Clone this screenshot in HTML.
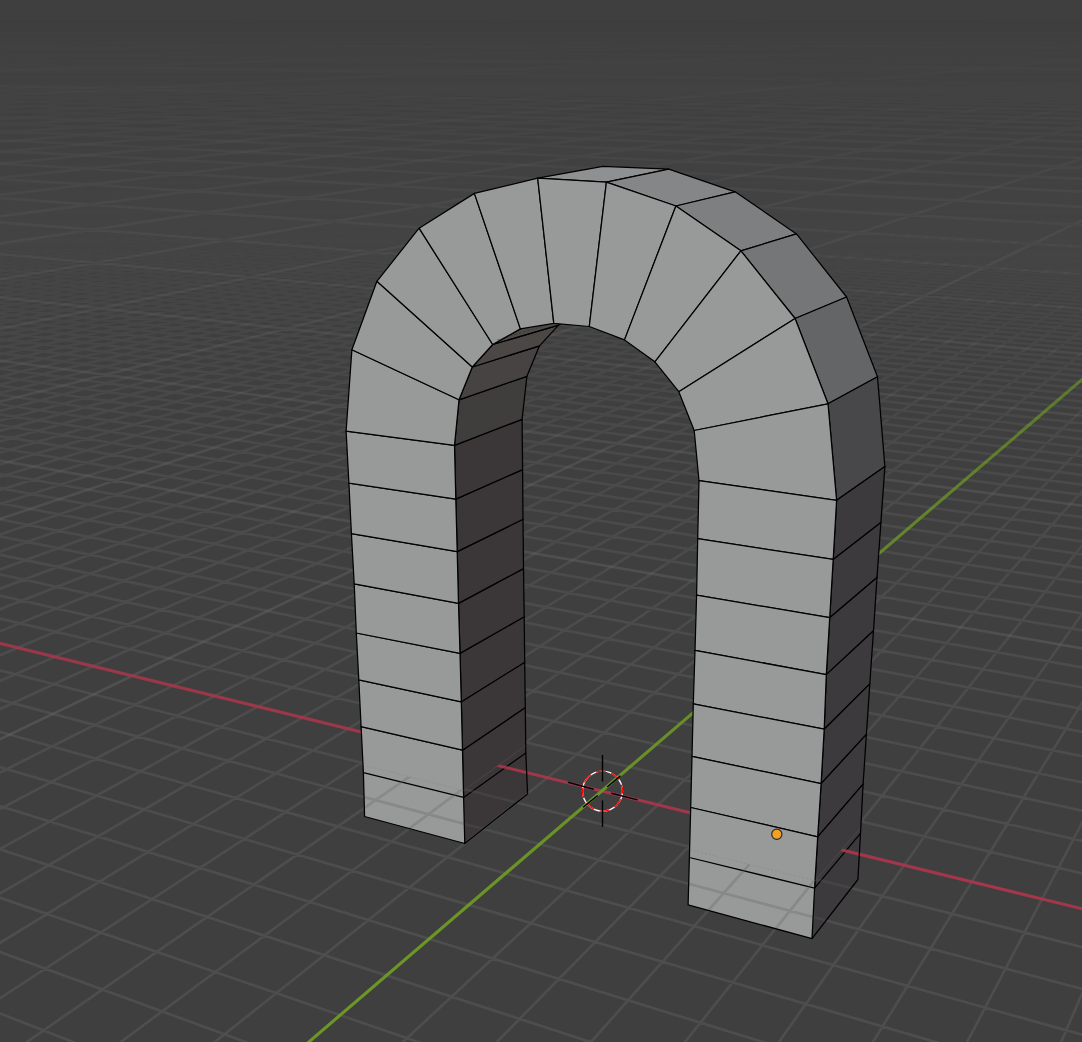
<!DOCTYPE html><html><head><meta charset="utf-8"><title>Blender viewport</title><style>html,body{margin:0;padding:0;background:#3f3f3f;overflow:hidden}svg{display:block}</style></head><body><svg width="1082" height="1042" viewBox="0 0 1082 1042">
<defs>
<linearGradient id="gf" gradientUnits="userSpaceOnUse" x1="0" y1="58" x2="0" y2="1042"><stop offset="0.0000" stop-color="#fff" stop-opacity="0.000"/><stop offset="0.0125" stop-color="#fff" stop-opacity="0.001"/><stop offset="0.0250" stop-color="#fff" stop-opacity="0.009"/><stop offset="0.0375" stop-color="#fff" stop-opacity="0.022"/><stop offset="0.0500" stop-color="#fff" stop-opacity="0.039"/><stop offset="0.0625" stop-color="#fff" stop-opacity="0.059"/><stop offset="0.0750" stop-color="#fff" stop-opacity="0.082"/><stop offset="0.0875" stop-color="#fff" stop-opacity="0.106"/><stop offset="0.1000" stop-color="#fff" stop-opacity="0.131"/><stop offset="0.1125" stop-color="#fff" stop-opacity="0.157"/><stop offset="0.1250" stop-color="#fff" stop-opacity="0.183"/><stop offset="0.1375" stop-color="#fff" stop-opacity="0.210"/><stop offset="0.1500" stop-color="#fff" stop-opacity="0.236"/><stop offset="0.1625" stop-color="#fff" stop-opacity="0.263"/><stop offset="0.1750" stop-color="#fff" stop-opacity="0.289"/><stop offset="0.1875" stop-color="#fff" stop-opacity="0.315"/><stop offset="0.2000" stop-color="#fff" stop-opacity="0.341"/><stop offset="0.2125" stop-color="#fff" stop-opacity="0.367"/><stop offset="0.2250" stop-color="#fff" stop-opacity="0.392"/><stop offset="0.2375" stop-color="#fff" stop-opacity="0.417"/><stop offset="0.2500" stop-color="#fff" stop-opacity="0.442"/><stop offset="0.2625" stop-color="#fff" stop-opacity="0.466"/><stop offset="0.2750" stop-color="#fff" stop-opacity="0.489"/><stop offset="0.2875" stop-color="#fff" stop-opacity="0.513"/><stop offset="0.3000" stop-color="#fff" stop-opacity="0.535"/><stop offset="0.3125" stop-color="#fff" stop-opacity="0.558"/><stop offset="0.3250" stop-color="#fff" stop-opacity="0.579"/><stop offset="0.3375" stop-color="#fff" stop-opacity="0.601"/><stop offset="0.3500" stop-color="#fff" stop-opacity="0.622"/><stop offset="0.3625" stop-color="#fff" stop-opacity="0.642"/><stop offset="0.3750" stop-color="#fff" stop-opacity="0.662"/><stop offset="0.3875" stop-color="#fff" stop-opacity="0.677"/><stop offset="0.4000" stop-color="#fff" stop-opacity="0.690"/><stop offset="0.4125" stop-color="#fff" stop-opacity="0.702"/><stop offset="0.4250" stop-color="#fff" stop-opacity="0.713"/><stop offset="0.4375" stop-color="#fff" stop-opacity="0.725"/><stop offset="0.4500" stop-color="#fff" stop-opacity="0.736"/><stop offset="0.4625" stop-color="#fff" stop-opacity="0.746"/><stop offset="0.4750" stop-color="#fff" stop-opacity="0.757"/><stop offset="0.4875" stop-color="#fff" stop-opacity="0.767"/><stop offset="0.5000" stop-color="#fff" stop-opacity="0.776"/><stop offset="0.5125" stop-color="#fff" stop-opacity="0.785"/><stop offset="0.5250" stop-color="#fff" stop-opacity="0.794"/><stop offset="0.5375" stop-color="#fff" stop-opacity="0.803"/><stop offset="0.5500" stop-color="#fff" stop-opacity="0.812"/><stop offset="0.5625" stop-color="#fff" stop-opacity="0.820"/><stop offset="0.5750" stop-color="#fff" stop-opacity="0.827"/><stop offset="0.5875" stop-color="#fff" stop-opacity="0.835"/><stop offset="0.6000" stop-color="#fff" stop-opacity="0.842"/><stop offset="0.6125" stop-color="#fff" stop-opacity="0.849"/><stop offset="0.6250" stop-color="#fff" stop-opacity="0.856"/><stop offset="0.6375" stop-color="#fff" stop-opacity="0.862"/><stop offset="0.6500" stop-color="#fff" stop-opacity="0.869"/><stop offset="0.6625" stop-color="#fff" stop-opacity="0.875"/><stop offset="0.6750" stop-color="#fff" stop-opacity="0.880"/><stop offset="0.6875" stop-color="#fff" stop-opacity="0.886"/><stop offset="0.7000" stop-color="#fff" stop-opacity="0.891"/><stop offset="0.7125" stop-color="#fff" stop-opacity="0.896"/><stop offset="0.7250" stop-color="#fff" stop-opacity="0.901"/><stop offset="0.7375" stop-color="#fff" stop-opacity="0.906"/><stop offset="0.7500" stop-color="#fff" stop-opacity="0.910"/><stop offset="0.7625" stop-color="#fff" stop-opacity="0.915"/><stop offset="0.7750" stop-color="#fff" stop-opacity="0.919"/><stop offset="0.7875" stop-color="#fff" stop-opacity="0.923"/><stop offset="0.8000" stop-color="#fff" stop-opacity="0.926"/><stop offset="0.8125" stop-color="#fff" stop-opacity="0.930"/><stop offset="0.8250" stop-color="#fff" stop-opacity="0.934"/><stop offset="0.8375" stop-color="#fff" stop-opacity="0.937"/><stop offset="0.8500" stop-color="#fff" stop-opacity="0.940"/><stop offset="0.8625" stop-color="#fff" stop-opacity="0.943"/><stop offset="0.8750" stop-color="#fff" stop-opacity="0.946"/><stop offset="0.8875" stop-color="#fff" stop-opacity="0.949"/><stop offset="0.9000" stop-color="#fff" stop-opacity="0.951"/><stop offset="0.9125" stop-color="#fff" stop-opacity="0.954"/><stop offset="0.9250" stop-color="#fff" stop-opacity="0.956"/><stop offset="0.9375" stop-color="#fff" stop-opacity="0.958"/><stop offset="0.9500" stop-color="#fff" stop-opacity="0.961"/><stop offset="0.9625" stop-color="#fff" stop-opacity="0.963"/><stop offset="0.9750" stop-color="#fff" stop-opacity="0.965"/><stop offset="0.9875" stop-color="#fff" stop-opacity="0.966"/><stop offset="1.0000" stop-color="#fff" stop-opacity="0.968"/></linearGradient>
<linearGradient id="gc" gradientUnits="userSpaceOnUse" x1="0" y1="18" x2="0" y2="1042"><stop offset="0.0000" stop-color="#fff" stop-opacity="0.000"/><stop offset="0.0125" stop-color="#fff" stop-opacity="0.011"/><stop offset="0.0250" stop-color="#fff" stop-opacity="0.044"/><stop offset="0.0375" stop-color="#fff" stop-opacity="0.080"/><stop offset="0.0500" stop-color="#fff" stop-opacity="0.109"/><stop offset="0.0625" stop-color="#fff" stop-opacity="0.135"/><stop offset="0.0750" stop-color="#fff" stop-opacity="0.161"/><stop offset="0.0875" stop-color="#fff" stop-opacity="0.186"/><stop offset="0.1000" stop-color="#fff" stop-opacity="0.211"/><stop offset="0.1125" stop-color="#fff" stop-opacity="0.235"/><stop offset="0.1250" stop-color="#fff" stop-opacity="0.259"/><stop offset="0.1375" stop-color="#fff" stop-opacity="0.283"/><stop offset="0.1500" stop-color="#fff" stop-opacity="0.306"/><stop offset="0.1625" stop-color="#fff" stop-opacity="0.328"/><stop offset="0.1750" stop-color="#fff" stop-opacity="0.350"/><stop offset="0.1875" stop-color="#fff" stop-opacity="0.371"/><stop offset="0.2000" stop-color="#fff" stop-opacity="0.392"/><stop offset="0.2125" stop-color="#fff" stop-opacity="0.413"/><stop offset="0.2250" stop-color="#fff" stop-opacity="0.433"/><stop offset="0.2375" stop-color="#fff" stop-opacity="0.453"/><stop offset="0.2500" stop-color="#fff" stop-opacity="0.472"/><stop offset="0.2625" stop-color="#fff" stop-opacity="0.490"/><stop offset="0.2750" stop-color="#fff" stop-opacity="0.508"/><stop offset="0.2875" stop-color="#fff" stop-opacity="0.526"/><stop offset="0.3000" stop-color="#fff" stop-opacity="0.543"/><stop offset="0.3125" stop-color="#fff" stop-opacity="0.560"/><stop offset="0.3250" stop-color="#fff" stop-opacity="0.576"/><stop offset="0.3375" stop-color="#fff" stop-opacity="0.592"/><stop offset="0.3500" stop-color="#fff" stop-opacity="0.608"/><stop offset="0.3625" stop-color="#fff" stop-opacity="0.623"/><stop offset="0.3750" stop-color="#fff" stop-opacity="0.637"/><stop offset="0.3875" stop-color="#fff" stop-opacity="0.651"/><stop offset="0.4000" stop-color="#fff" stop-opacity="0.665"/><stop offset="0.4125" stop-color="#fff" stop-opacity="0.678"/><stop offset="0.4250" stop-color="#fff" stop-opacity="0.691"/><stop offset="0.4375" stop-color="#fff" stop-opacity="0.704"/><stop offset="0.4500" stop-color="#fff" stop-opacity="0.716"/><stop offset="0.4625" stop-color="#fff" stop-opacity="0.727"/><stop offset="0.4750" stop-color="#fff" stop-opacity="0.739"/><stop offset="0.4875" stop-color="#fff" stop-opacity="0.750"/><stop offset="0.5000" stop-color="#fff" stop-opacity="0.760"/><stop offset="0.5125" stop-color="#fff" stop-opacity="0.771"/><stop offset="0.5250" stop-color="#fff" stop-opacity="0.780"/><stop offset="0.5375" stop-color="#fff" stop-opacity="0.790"/><stop offset="0.5500" stop-color="#fff" stop-opacity="0.799"/><stop offset="0.5625" stop-color="#fff" stop-opacity="0.808"/><stop offset="0.5750" stop-color="#fff" stop-opacity="0.817"/><stop offset="0.5875" stop-color="#fff" stop-opacity="0.825"/><stop offset="0.6000" stop-color="#fff" stop-opacity="0.833"/><stop offset="0.6125" stop-color="#fff" stop-opacity="0.840"/><stop offset="0.6250" stop-color="#fff" stop-opacity="0.848"/><stop offset="0.6375" stop-color="#fff" stop-opacity="0.855"/><stop offset="0.6500" stop-color="#fff" stop-opacity="0.861"/><stop offset="0.6625" stop-color="#fff" stop-opacity="0.868"/><stop offset="0.6750" stop-color="#fff" stop-opacity="0.874"/><stop offset="0.6875" stop-color="#fff" stop-opacity="0.880"/><stop offset="0.7000" stop-color="#fff" stop-opacity="0.886"/><stop offset="0.7125" stop-color="#fff" stop-opacity="0.891"/><stop offset="0.7250" stop-color="#fff" stop-opacity="0.897"/><stop offset="0.7375" stop-color="#fff" stop-opacity="0.902"/><stop offset="0.7500" stop-color="#fff" stop-opacity="0.907"/><stop offset="0.7625" stop-color="#fff" stop-opacity="0.911"/><stop offset="0.7750" stop-color="#fff" stop-opacity="0.916"/><stop offset="0.7875" stop-color="#fff" stop-opacity="0.920"/><stop offset="0.8000" stop-color="#fff" stop-opacity="0.924"/><stop offset="0.8125" stop-color="#fff" stop-opacity="0.928"/><stop offset="0.8250" stop-color="#fff" stop-opacity="0.932"/><stop offset="0.8375" stop-color="#fff" stop-opacity="0.935"/><stop offset="0.8500" stop-color="#fff" stop-opacity="0.938"/><stop offset="0.8625" stop-color="#fff" stop-opacity="0.942"/><stop offset="0.8750" stop-color="#fff" stop-opacity="0.945"/><stop offset="0.8875" stop-color="#fff" stop-opacity="0.948"/><stop offset="0.9000" stop-color="#fff" stop-opacity="0.950"/><stop offset="0.9125" stop-color="#fff" stop-opacity="0.953"/><stop offset="0.9250" stop-color="#fff" stop-opacity="0.956"/><stop offset="0.9375" stop-color="#fff" stop-opacity="0.958"/><stop offset="0.9500" stop-color="#fff" stop-opacity="0.960"/><stop offset="0.9625" stop-color="#fff" stop-opacity="0.962"/><stop offset="0.9750" stop-color="#fff" stop-opacity="0.964"/><stop offset="0.9875" stop-color="#fff" stop-opacity="0.966"/><stop offset="1.0000" stop-color="#fff" stop-opacity="0.968"/></linearGradient>
<linearGradient id="gh" gradientUnits="userSpaceOnUse" x1="0" y1="18" x2="0" y2="1042"><stop offset="0.0000" stop-color="#fff" stop-opacity="0.000"/><stop offset="0.0125" stop-color="#fff" stop-opacity="0.027"/><stop offset="0.0250" stop-color="#fff" stop-opacity="0.055"/><stop offset="0.0375" stop-color="#fff" stop-opacity="0.082"/><stop offset="0.0500" stop-color="#fff" stop-opacity="0.109"/><stop offset="0.0625" stop-color="#fff" stop-opacity="0.135"/><stop offset="0.0750" stop-color="#fff" stop-opacity="0.161"/><stop offset="0.0875" stop-color="#fff" stop-opacity="0.186"/><stop offset="0.1000" stop-color="#fff" stop-opacity="0.211"/><stop offset="0.1125" stop-color="#fff" stop-opacity="0.235"/><stop offset="0.1250" stop-color="#fff" stop-opacity="0.259"/><stop offset="0.1375" stop-color="#fff" stop-opacity="0.283"/><stop offset="0.1500" stop-color="#fff" stop-opacity="0.306"/><stop offset="0.1625" stop-color="#fff" stop-opacity="0.328"/><stop offset="0.1750" stop-color="#fff" stop-opacity="0.350"/><stop offset="0.1875" stop-color="#fff" stop-opacity="0.371"/><stop offset="0.2000" stop-color="#fff" stop-opacity="0.392"/><stop offset="0.2125" stop-color="#fff" stop-opacity="0.413"/><stop offset="0.2250" stop-color="#fff" stop-opacity="0.433"/><stop offset="0.2375" stop-color="#fff" stop-opacity="0.453"/><stop offset="0.2500" stop-color="#fff" stop-opacity="0.472"/><stop offset="0.2625" stop-color="#fff" stop-opacity="0.490"/><stop offset="0.2750" stop-color="#fff" stop-opacity="0.508"/><stop offset="0.2875" stop-color="#fff" stop-opacity="0.526"/><stop offset="0.3000" stop-color="#fff" stop-opacity="0.543"/><stop offset="0.3125" stop-color="#fff" stop-opacity="0.560"/><stop offset="0.3250" stop-color="#fff" stop-opacity="0.576"/><stop offset="0.3375" stop-color="#fff" stop-opacity="0.592"/><stop offset="0.3500" stop-color="#fff" stop-opacity="0.608"/><stop offset="0.3625" stop-color="#fff" stop-opacity="0.623"/><stop offset="0.3750" stop-color="#fff" stop-opacity="0.637"/><stop offset="0.3875" stop-color="#fff" stop-opacity="0.651"/><stop offset="0.4000" stop-color="#fff" stop-opacity="0.665"/><stop offset="0.4125" stop-color="#fff" stop-opacity="0.678"/><stop offset="0.4250" stop-color="#fff" stop-opacity="0.691"/><stop offset="0.4375" stop-color="#fff" stop-opacity="0.704"/><stop offset="0.4500" stop-color="#fff" stop-opacity="0.716"/><stop offset="0.4625" stop-color="#fff" stop-opacity="0.727"/><stop offset="0.4750" stop-color="#fff" stop-opacity="0.739"/><stop offset="0.4875" stop-color="#fff" stop-opacity="0.750"/><stop offset="0.5000" stop-color="#fff" stop-opacity="0.760"/><stop offset="0.5125" stop-color="#fff" stop-opacity="0.771"/><stop offset="0.5250" stop-color="#fff" stop-opacity="0.780"/><stop offset="0.5375" stop-color="#fff" stop-opacity="0.790"/><stop offset="0.5500" stop-color="#fff" stop-opacity="0.799"/><stop offset="0.5625" stop-color="#fff" stop-opacity="0.808"/><stop offset="0.5750" stop-color="#fff" stop-opacity="0.817"/><stop offset="0.5875" stop-color="#fff" stop-opacity="0.825"/><stop offset="0.6000" stop-color="#fff" stop-opacity="0.833"/><stop offset="0.6125" stop-color="#fff" stop-opacity="0.840"/><stop offset="0.6250" stop-color="#fff" stop-opacity="0.848"/><stop offset="0.6375" stop-color="#fff" stop-opacity="0.855"/><stop offset="0.6500" stop-color="#fff" stop-opacity="0.861"/><stop offset="0.6625" stop-color="#fff" stop-opacity="0.868"/><stop offset="0.6750" stop-color="#fff" stop-opacity="0.874"/><stop offset="0.6875" stop-color="#fff" stop-opacity="0.880"/><stop offset="0.7000" stop-color="#fff" stop-opacity="0.886"/><stop offset="0.7125" stop-color="#fff" stop-opacity="0.891"/><stop offset="0.7250" stop-color="#fff" stop-opacity="0.897"/><stop offset="0.7375" stop-color="#fff" stop-opacity="0.902"/><stop offset="0.7500" stop-color="#fff" stop-opacity="0.907"/><stop offset="0.7625" stop-color="#fff" stop-opacity="0.911"/><stop offset="0.7750" stop-color="#fff" stop-opacity="0.916"/><stop offset="0.7875" stop-color="#fff" stop-opacity="0.920"/><stop offset="0.8000" stop-color="#fff" stop-opacity="0.924"/><stop offset="0.8125" stop-color="#fff" stop-opacity="0.928"/><stop offset="0.8250" stop-color="#fff" stop-opacity="0.932"/><stop offset="0.8375" stop-color="#fff" stop-opacity="0.935"/><stop offset="0.8500" stop-color="#fff" stop-opacity="0.938"/><stop offset="0.8625" stop-color="#fff" stop-opacity="0.942"/><stop offset="0.8750" stop-color="#fff" stop-opacity="0.945"/><stop offset="0.8875" stop-color="#fff" stop-opacity="0.948"/><stop offset="0.9000" stop-color="#fff" stop-opacity="0.950"/><stop offset="0.9125" stop-color="#fff" stop-opacity="0.953"/><stop offset="0.9250" stop-color="#fff" stop-opacity="0.956"/><stop offset="0.9375" stop-color="#fff" stop-opacity="0.958"/><stop offset="0.9500" stop-color="#fff" stop-opacity="0.960"/><stop offset="0.9625" stop-color="#fff" stop-opacity="0.962"/><stop offset="0.9750" stop-color="#fff" stop-opacity="0.964"/><stop offset="0.9875" stop-color="#fff" stop-opacity="0.966"/><stop offset="1.0000" stop-color="#fff" stop-opacity="0.968"/></linearGradient>
<mask id="mf" maskUnits="userSpaceOnUse" x="0" y="0" width="1082" height="1042"><rect width="1082" height="1042" fill="url(#gf)"/></mask>
<mask id="mc" maskUnits="userSpaceOnUse" x="0" y="0" width="1082" height="1042"><rect width="1082" height="1042" fill="url(#gc)"/></mask>
<mask id="mh" maskUnits="userSpaceOnUse" x="0" y="0" width="1082" height="1042"><rect width="1082" height="1042" fill="url(#gh)"/></mask>
<g id="grid" fill="none">
<g mask="url(#mf)"><path d="M-5 58.6L-3.3 58.6M-5 58.7L0.4 58.6M-5 58.8L4 58.6M-5 58.9L7.7 58.6M-5 59L11.3 58.6M-5 59.1L15 58.6M-5 59.3L22.3 58.6M-5 59.4L25.9 58.6M-5 59.5L29.6 58.6M-5 59.6L33.2 58.6M-5 59.7L36.9 58.6M-5 59.8L40.5 58.6M-5 59.9L44.2 58.6M-5 60L47.8 58.6M-5 60.1L51.5 58.6M-5 60.4L58.8 58.6M-5 60.5L62.5 58.6M-5 60.6L66.1 58.6M-5 60.7L69.8 58.6M-5 60.8L73.4 58.6M-5 60.9L77.1 58.6M-5 61L80.7 58.6M-5 61.1L84.4 58.6M-5 61.2L88 58.6M-5 61.5L95.3 58.6M-5 61.6L99 58.6M-5 61.7L102.7 58.6M-5 61.8L106.3 58.6M-5 61.9L110 58.6M-5 62L113.6 58.6M-5 62.1L117.3 58.6M-5 62.3L120.9 58.6M-5 62.4L124.6 58.6M-5 62.6L131.9 58.6M-5 62.7L135.6 58.6M-5 62.8L139.2 58.6M-5 63L142.9 58.6M-5 63.1L146.5 58.6M-5 63.2L150.2 58.6M-5 63.3L153.9 58.6M-5 63.5L157.5 58.6M-5 63.6L161.2 58.6M-5 63.8L168.5 58.6M-5 64L172.2 58.6M-5 64.1L175.8 58.6M-5 64.2L179.5 58.6M-5 64.3L183.1 58.6M-5 64.5L186.8 58.6M-5 64.6L190.4 58.6M-5 64.7L194.1 58.6M-5 64.9L197.8 58.6M-5 65.1L205.1 58.6M-5 65.3L208.8 58.6M-5 65.4L212.4 58.6M-5 65.5L216.1 58.6M-5 65.7L219.7 58.6M-5 65.8L223.4 58.6M-5 65.9L227.1 58.6M-5 66.1L230.7 58.6M-5 66.2L234.4 58.6M-5 66.5L241.7 58.6M-5 66.6L245.4 58.6M-5 66.8L249 58.6M-5 66.9L252.7 58.6M-5 67.1L256.4 58.6M-5 67.2L260 58.6M-5 67.3L263.7 58.6M-5 67.5L267.4 58.6M-5 67.6L271 58.6M-5 67.9L278.3 58.6M-5 68.1L282 58.6M-5 68.2L285.7 58.6M-5 68.4L289.3 58.6M-5 68.5L293 58.6M-5 68.7L296.7 58.6M-5 68.8L300.3 58.6M-5 69L304 58.6M-5 69.2L307.7 58.6M-5 69.5L315 58.6M-5 69.6L318.7 58.6M-5 69.8L322.3 58.6M-5 70L326 58.6M-5 70.1L329.7 58.6M-5 70.3L333.3 58.6M-5 70.4L337 58.6M-5 70.6L340.7 58.6M-5 70.8L344.3 58.6M-5 71.1L351.7 58.6M-5 71.3L355.3 58.6M-5 71.5L359 58.6M-5 71.6L362.7 58.6M-5 71.8L366.3 58.6M-5 72L370 58.6M-5 72.1L373.7 58.6M-5 72.3L377.4 58.6M-5 72.5L381 58.6M-5 72.9L388.4 58.6M-5 73L392 58.6M-5 73.2L395.7 58.6M-5 73.4L399.4 58.6M-5 73.6L403 58.6M-5 73.8L406.7 58.6M-5 74L410.4 58.6M-5 74.2L414.1 58.6M-5 74.3L417.7 58.6M-5 74.7L425.1 58.6M-5 74.9L428.7 58.6M-5 75.1L432.4 58.6M-5 75.3L436.1 58.6M-5 75.5L439.8 58.6M-5 75.7L443.4 58.6M-5 75.9L447.1 58.6M-5 76.1L450.8 58.6M-5 76.3L454.5 58.6M-5 76.7L461.8 58.6M-5 76.9L465.5 58.6M-5 77.1L469.1 58.6M-5 77.4L472.8 58.6M-5 77.6L476.5 58.6M-5 77.8L480.2 58.6M-5 78L483.8 58.6M-5 78.2L487.5 58.6M-5 78.4L491.2 58.6M-5 78.9L498.5 58.6M-5 79.1L502.2 58.6M-5 79.3L505.9 58.6M-5 79.5L509.6 58.6M-5 79.8L513.2 58.6M-5 80L516.9 58.6M-5 80.2L520.6 58.6M-5 80.5L524.3 58.6M-5 80.7L528 58.6M-5 81.2L535.3 58.6M-5 81.4L539 58.6M-5 81.7L542.7 58.6M-5 81.9L546.3 58.6M-5 82.2L550 58.6M-5 82.4L553.7 58.6M-5 82.7L557.4 58.6M-5 82.9L561.1 58.6M-5 83.2L564.7 58.6M-5 83.7L572.1 58.6M-5 83.9L575.8 58.6M-5 84.2L579.4 58.6M-5 84.5L583.1 58.6M-5 84.7L586.8 58.6M-5 85L590.5 58.6M-5 85.3L594.2 58.6M-5 85.5L597.8 58.6M-5 85.8L601.5 58.6M-5 86.4L608.9 58.6M-5 86.7L612.6 58.6M-5 86.9L616.2 58.6M-5 87.2L619.9 58.6M-5 87.5L623.6 58.6M-5 87.8L627.3 58.6M-5 88.1L631 58.6M-5 88.4L634.7 58.6M-5 88.7L638.3 58.6M-5 89.3L645.7 58.6M-5 89.6L649.4 58.6M-5 89.9L653.1 58.6M-5 90.2L656.8 58.6M-5 90.6L660.4 58.6M-5 90.9L664.1 58.6M-5 91.2L667.8 58.6M-5 91.5L671.5 58.6M-5 91.8L675.2 58.6M-5 92.5L682.5 58.6M-5 92.8L686.2 58.6M-5 93.2L689.9 58.6M-5 93.5L693.6 58.6M-5 93.9L697.3 58.6M-5 94.2L701 58.6M-5 94.6L704.7 58.6M-5 94.9L708.3 58.6M-5 95.3L712 58.6M-5 96L719.4 58.6M-5 96.4L723.1 58.6M-5 96.7L726.8 58.6M-5 97.1L730.5 58.6M-5 97.5L734.1 58.6M-5 97.9L737.8 58.6M-5 98.3L741.5 58.6M-5 98.7L745.2 58.6M-5 99.1L748.9 58.6M-5 99.8L756.3 58.6M-5 100.3L760 58.6M-5 100.7L763.6 58.6M-5 101.1L767.3 58.6M-5 101.5L771 58.6M-5 101.9L774.7 58.6M-5 102.3L778.4 58.6M-5 102.8L782.1 58.6M-5 103.2L785.8 58.6M-5 104.1L793.2 58.6M-5 104.5L796.8 58.6M-5 105L800.5 58.6M-5 105.5L804.2 58.6M-5 105.9L807.9 58.6M-5 106.4L811.6 58.6M-5 106.9L815.3 58.6M-5 107.3L819 58.6M-5 107.8L822.7 58.6M-5 108.8L830.1 58.6M-5 109.3L833.8 58.6M-5 109.8L837.5 58.6M-5 110.3L841.1 58.6M-5 110.8L844.8 58.6M-5 111.4L848.5 58.6M-5 111.9L852.2 58.6M-5 112.4L855.9 58.6M-5 113L859.6 58.6M-5 114.1L867 58.6M-5 114.6L870.7 58.6M-5 115.2L874.4 58.6M-5 115.8L878.1 58.6M-5 116.4L881.8 58.6M-5 116.9L885.5 58.6M-5 117.5L889.2 58.6M-5 118.1L892.9 58.6M-5 118.8L896.5 58.6M-5 120L903.9 58.6M-5 120.6L907.6 58.6M-5 121.3L911.3 58.6M-5 121.9L915 58.6M-5 122.6L918.7 58.6M-5 123.2L922.4 58.6M-5 123.9L926.1 58.6M-5 124.6L929.8 58.6M-5 125.3L933.5 58.6M-5 126.7L940.9 58.6M-5 127.4L944.6 58.6M-5 128.1L948.3 58.6M-5 128.9L952 58.6M-5 129.6L955.7 58.6M-5 130.4L959.4 58.6M-5 131.1L963.1 58.6M-5 131.9L966.8 58.6M-5 132.7L970.5 58.6M-5 134.3L977.9 58.6M-5 135.1L981.6 58.6M-5 136L985.3 58.6M-5 136.8L989 58.6M-5 137.7L992.7 58.6M-5 138.6L996.4 58.6M-5 139.5L1000.1 58.6M-5 140.3L1003.8 58.6M-5 141.3L1007.5 58.6M-5 143.1L1014.9 58.6M-5 144.1L1018.6 58.6M-5 145L1022.3 58.6M-5 146L1026 58.6M-5 147L1029.7 58.6M-5 148L1033.4 58.6M-5 149.1L1037.1 58.6M-5 150.1L1040.8 58.6M-5 151.2L1044.5 58.6M-5 153.4L1051.9 58.6M-5 154.5L1055.6 58.6M-5 155.6L1059.3 58.6M-5 156.8L1063 58.6M-5 158L1066.7 58.6M-5 159.2L1070.4 58.6M-5 160.4L1074.1 58.6M-5 161.6L1077.8 58.6M-5 162.9L1081.5 58.6M-5 165.5L1087 58.8M-5 166.8L1087 59.1M-5 168.1L1087 59.5M-5 169.5L1087 59.9M-5 170.9L1087 60.3M-5 172.3L1087 60.7M-5 173.8L1087 61.1M-5 175.3L1087 61.5M-5 176.8L1087 61.9M-5 179.9L1087 62.7M-5 181.5L1087 63.2M-5 183.1L1087 63.6M-5 184.8L1087 64.1M-5 186.5L1087 64.6M-5 188.3L1087 65.1M-5 190L1087 65.5M-5 191.8L1087 66M-5 193.7L1087 66.6M-5 197.5L1087 67.6M-5 199.5L1087 68.2M-5 201.5L1087 68.7M-5 203.6L1087 69.3M-5 205.7L1087 69.9M-5 207.8L1087 70.5M-5 210.1L1087 71.1M-5 212.3L1087 71.7M-5 214.6L1087 72.3M-5 219.4L1087 73.7M-5 221.9L1087 74.4M-5 224.5L1087 75.1M-5 227.1L1087 75.8M-5 229.8L1087 76.5M-5 232.5L1087 77.3M-5 235.4L1087 78.1M-5 238.3L1087 78.9M-5 241.3L1087 79.7M-5 247.5L1087 81.4M-5 250.7L1087 82.3M-5 254L1087 83.2M-5 257.5L1087 84.2M-5 261L1087 85.2M-5 264.6L1087 86.2M-5 268.4L1087 87.2M-5 272.2L1087 88.3M-5 276.2L1087 89.4M-5 284.6L1087 91.7M-5 289L1087 92.9M-5 293.5L1087 94.1M-5 298.2L1087 95.4M-5 303L1087 96.8M-5 308.1L1087 98.2M-5 313.3L1087 99.6M-5 318.6L1087 101.1M-5 324.2L1087 102.6M-5 336.1L1087 105.9M-5 342.3L1087 107.6M-5 348.8L1087 109.4M-5 355.6L1087 111.3M-5 362.7L1087 113.3M-5 370.1L1087 115.3M-5 377.8L1087 117.4M-5 385.8L1087 119.6M-5 394.2L1087 122M-5 412.2L1087 126.9M-5 421.9L1087 129.6M-5 432.1L1087 132.4M-5 442.7L1087 135.4M-5 454L1087 138.5M-5 465.9L1087 141.8M-5 478.4L1087 145.2M-5 491.6L1087 148.9M-5 505.7L1087 152.8M-5 536.4L1087 161.3M-5 553.3L1087 165.9M-5 571.3L1087 170.9M-5 590.6L1087 176.2M-5 611.2L1087 181.9M-5 633.4L1087 188.1M-5 657.3L1087 194.7M-5 683.2L1087 201.8M-5 711.2L1087 209.6M-5 775L1087 227.2M-5 811.6L1087 237.3M-5 851.8L1087 248.4M-5 896.4L1087 260.7M-5 946L1087 274.4M-5 1001.5L1087 289.8M19.6 1047L1087 307M114.1 1047L1087 326.7M208.5 1047L1087 349.2M397.5 1047L1087 405.8M492 1047L1087 442M586.5 1047L1087 485.6M681 1047L1087 539.3M775.4 1047L1087 606.9M869.9 1047L1087 694.7M964.5 1047L1087 813.3M1059 1047L1087 982.2M85.9 1047L-5 1011.5M259.2 1047L-5 950.2M432.5 1047L-5 896M605.8 1047L-5 847.8M779.1 1047L-5 804.6M952.4 1047L-5 765.7M1087 1036.1L-5 730.5M1087 990.3L-5 698.4M1087 948.4L-5 669.1M1087 874.6L-5 617.4M1087 841.9L-5 594.6M1087 811.6L-5 573.4M1087 783.5L-5 553.7M1087 757.2L-5 535.4M1087 732.8L-5 518.3M1087 709.9L-5 502.2M1087 688.4L-5 487.2M1087 668.2L-5 473.1M1087 631.3L-5 447.3M1087 614.3L-5 435.4M1087 598.3L-5 424.2M1087 583.1L-5 413.6M1087 568.7L-5 403.5M1087 555L-5 393.9M1087 542L-5 384.8M1087 529.6L-5 376.1M1087 517.7L-5 367.9M1087 495.6L-5 352.4M1087 485.3L-5 345.2M1087 475.4L-5 338.2M1087 465.9L-5 331.6M1087 456.8L-5 325.2M1087 448.1L-5 319.1M1087 439.7L-5 313.3M1087 431.6L-5 307.6M1087 423.8L-5 302.2M1087 409.1L-5 291.9M1087 402.2L-5 287M1087 395.4L-5 282.3M1087 389L-5 277.8M1087 382.7L-5 273.4M1087 376.6L-5 269.2M1087 370.8L-5 265.1M1087 365.1L-5 261.1M1087 359.6L-5 257.3M1087 349.2L-5 250M1087 344.2L-5 246.5M1087 339.3L-5 243.1M1087 334.6L-5 239.8M1087 330L-5 236.6M1087 325.6L-5 233.5M1087 321.3L-5 230.4M1087 317.1L-5 227.5M1087 313L-5 224.6M1087 305.1L-5 219.2M1087 301.4L-5 216.5M1087 297.7L-5 214M1087 294.1L-5 211.5M1087 290.6L-5 209M1087 287.2L-5 206.6M1087 283.9L-5 204.3M1087 280.7L-5 202.1M1087 277.5L-5 199.9M1087 271.4L-5 195.6M1087 268.5L-5 193.5M1087 265.6L-5 191.5M1087 262.8L-5 189.6M1087 260.1L-5 187.7M1087 257.4L-5 185.8M1087 254.8L-5 183.9M1087 252.2L-5 182.2M1087 249.7L-5 180.4M1087 244.8L-5 177M1087 242.5L-5 175.3M1087 240.2L-5 173.7M1087 237.9L-5 172.1M1087 235.7L-5 170.6M1087 233.5L-5 169.1M1087 231.4L-5 167.6M1087 229.3L-5 166.1M1087 227.3L-5 164.7M1087 223.3L-5 161.9M1087 221.4L-5 160.6M1087 219.5L-5 159.2M1087 217.6L-5 157.9M1087 215.8L-5 156.7M1087 214L-5 155.4M1087 212.2L-5 154.2M1087 210.5L-5 153M1087 208.8L-5 151.8M1087 205.5L-5 149.5M1087 203.9L-5 148.3M1087 202.3L-5 147.2M1087 200.7L-5 146.1M1087 199.2L-5 145.1M1087 197.7L-5 144M1087 196.2L-5 143M1087 194.7L-5 142M1087 193.3L-5 141M1087 190.5L-5 139M1087 189.1L-5 138M1087 187.8L-5 137.1M1087 186.5L-5 136.2M1087 185.2L-5 135.3M1087 183.9L-5 134.4M1087 182.6L-5 133.5M1087 181.4L-5 132.6M1087 180.2L-5 131.8M1087 177.8L-5 130.1M1087 176.6L-5 129.3M1087 175.4L-5 128.5M1087 174.3L-5 127.7M1087 173.2L-5 126.9M1087 172.1L-5 126.1M1087 171L-5 125.3M1087 169.9L-5 124.6M1087 168.8L-5 123.8M1087 166.8L-5 122.4M1087 165.8L-5 121.7M1087 164.8L-5 121M1087 163.8L-5 120.3M1087 162.8L-5 119.6M1087 161.8L-5 118.9M1087 160.9L-5 118.3M1087 159.9L-5 117.6M1087 159L-5 117M1087 157.2L-5 115.7M1087 156.3L-5 115.1M1087 155.4L-5 114.5M1087 154.6L-5 113.8M1087 153.7L-5 113.2M1087 152.9L-5 112.7M1087 152L-5 112.1M1087 151.2L-5 111.5M1087 150.4L-5 110.9M1087 148.8L-5 109.8M1087 148L-5 109.3M1087 147.2L-5 108.7M1087 146.4L-5 108.2M1087 145.7L-5 107.6M1087 144.9L-5 107.1M1087 144.2L-5 106.6M1087 143.5L-5 106.1M1087 142.7L-5 105.6M1087 141.3L-5 104.6M1087 140.6L-5 104.1M1087 139.9L-5 103.6M1087 139.2L-5 103.1M1087 138.6L-5 102.7M1087 137.9L-5 102.2M1087 137.2L-5 101.7M1087 136.6L-5 101.3M1087 135.9L-5 100.8M1087 134.7L-5 99.9M1087 134L-5 99.5M1087 133.4L-5 99.1M1087 132.8L-5 98.6M1087 132.2L-5 98.2M1087 131.6L-5 97.8M1087 131L-5 97.4M1087 130.4L-5 97M1087 129.8L-5 96.6M1087 128.7L-5 95.8M1087 128.1L-5 95.4M1087 127.6L-5 95M1087 127L-5 94.6M1087 126.5L-5 94.2M1087 125.9L-5 93.8M1087 125.4L-5 93.5M1087 124.9L-5 93.1M1087 124.3L-5 92.7M1087 123.3L-5 92M1087 122.8L-5 91.6M1087 122.3L-5 91.3M1087 121.8L-5 90.9M1087 121.3L-5 90.6M1087 120.8L-5 90.2M1087 120.3L-5 89.9M1087 119.8L-5 89.6M1087 119.4L-5 89.2M1087 118.4L-5 88.6M1087 118L-5 88.2M1087 117.5L-5 87.9M1087 117L-5 87.6M1087 116.6L-5 87.3M1087 116.1L-5 87M1087 115.7L-5 86.7M1087 115.3L-5 86.4M1087 114.8L-5 86.1M1087 114L-5 85.5M1087 113.5L-5 85.2M1087 113.1L-5 84.9M1087 112.7L-5 84.6M1087 112.3L-5 84.3M1087 111.9L-5 84M1087 111.5L-5 83.7M1087 111.1L-5 83.4M1087 110.7L-5 83.2M1087 109.9L-5 82.6M1087 109.5L-5 82.3M1087 109.1L-5 82.1M1087 108.7L-5 81.8M1087 108.4L-5 81.5M1087 108L-5 81.3M1087 107.6L-5 81M1087 107.2L-5 80.8M1087 106.9L-5 80.5M1087 106.1L-5 80M1087 105.8L-5 79.7M1087 105.4L-5 79.5M1087 105.1L-5 79.2M1087 104.7L-5 79M1087 104.4L-5 78.8M1087 104L-5 78.5M1087 103.7L-5 78.3M1087 103.4L-5 78M1087 102.7L-5 77.6M1087 102.4L-5 77.3M1087 102L-5 77.1M1087 101.7L-5 76.9M1087 101.4L-5 76.7M1087 101.1L-5 76.4M1087 100.8L-5 76.2M1087 100.4L-5 76M1087 100.1L-5 75.8M1087 99.5L-5 75.3M1087 99.2L-5 75.1M1087 98.9L-5 74.9M1087 98.6L-5 74.7M1087 98.3L-5 74.5M1087 98L-5 74.3M1087 97.7L-5 74.1M1087 97.4L-5 73.9M1087 97.1L-5 73.7M1087 96.6L-5 73.3M1087 96.3L-5 73.1M1087 96L-5 72.9M1087 95.7L-5 72.7M1087 95.4L-5 72.5M1087 95.2L-5 72.3M1087 94.9L-5 72.1M1087 94.6L-5 71.9M1087 94.3L-5 71.7M1087 93.8L-5 71.4M1087 93.5L-5 71.2M1087 93.3L-5 71M1087 93L-5 70.8M1087 92.8L-5 70.6M1087 92.5L-5 70.4M1087 92.2L-5 70.3M1087 92L-5 70.1M1087 91.7L-5 69.9M1087 91.2L-5 69.6M1087 91L-5 69.4M1087 90.7L-5 69.2M1087 90.5L-5 69M1087 90.3L-5 68.9M1087 90L-5 68.7M1087 89.8L-5 68.5M1087 89.5L-5 68.4M1087 89.3L-5 68.2M1087 88.8L-5 67.9M1087 88.6L-5 67.7M1087 88.4L-5 67.6M1087 88.2L-5 67.4M1087 87.9L-5 67.2M1087 87.7L-5 67.1M1087 87.5L-5 66.9M1087 87.3L-5 66.8M1087 87L-5 66.6M1087 86.6L-5 66.3M1087 86.4L-5 66.2M1087 86.2L-5 66M1087 86L-5 65.9M1087 85.7L-5 65.7M1087 85.5L-5 65.6M1087 85.3L-5 65.4M1087 85.1L-5 65.3M1087 84.9L-5 65.1M1087 84.5L-5 64.8M1087 84.3L-5 64.7M1087 84.1L-5 64.6M1087 83.9L-5 64.4M1087 83.7L-5 64.3M1087 83.5L-5 64.1M1087 83.3L-5 64M1087 83.1L-5 63.9M1087 82.9L-5 63.7M1087 82.5L-5 63.5M1087 82.3L-5 63.3M1087 82.1L-5 63.2M1087 81.9L-5 63.1M1087 81.8L-5 62.9M1087 81.6L-5 62.8M1087 81.4L-5 62.7M1087 81.2L-5 62.5M1087 81L-5 62.4M1087 80.7L-5 62.2M1087 80.5L-5 62M1087 80.3L-5 61.9M1087 80.1L-5 61.8M1087 79.9L-5 61.7M1087 79.8L-5 61.5M1087 79.6L-5 61.4M1087 79.4L-5 61.3M1087 79.2L-5 61.2M1087 78.9L-5 60.9M1087 78.7L-5 60.8M1087 78.5L-5 60.7M1087 78.4L-5 60.6M1087 78.2L-5 60.4M1087 78L-5 60.3M1087 77.9L-5 60.2M1087 77.7L-5 60.1M1087 77.6L-5 60M1087 77.2L-5 59.8M1087 77.1L-5 59.6M1087 76.9L-5 59.5M1087 76.7L-5 59.4M1087 76.6L-5 59.3M1087 76.4L-5 59.2M1087 76.3L-5 59.1M1087 76.1L-5 59M1087 76L-5 58.9M1087 75.7L-5 58.7M1087 75.5L-4.2 58.6M1087 75.3L2.7 58.6M1087 75.2L9.6 58.6M1087 75L16.4 58.6M1087 74.9L23.3 58.6M1087 74.7L30.2 58.6M1087 74.6L37.1 58.6M1087 74.5L43.9 58.6M1087 74.2L57.7 58.6M1087 74L64.6 58.6M1087 73.9L71.5 58.6M1087 73.7L78.4 58.6M1087 73.6L85.2 58.6M1087 73.4L92.1 58.6M1087 73.3L99 58.6M1087 73.2L105.9 58.6M1087 73L112.8 58.6M1087 72.7L126.5 58.6M1087 72.6L133.4 58.6M1087 72.5L140.3 58.6M1087 72.3L147.2 58.6M1087 72.2L154.1 58.6M1087 72.1L161 58.6M1087 71.9L167.9 58.6M1087 71.8L174.8 58.6M1087 71.7L181.7 58.6M1087 71.4L195.4 58.6M1087 71.3L202.3 58.6M1087 71.1L209.2 58.6M1087 71L216.1 58.6M1087 70.9L223 58.6M1087 70.7L229.9 58.6M1087 70.6L236.8 58.6M1087 70.5L243.7 58.6M1087 70.4L250.6 58.6M1087 70.1L264.4 58.6M1087 70L271.3 58.6M1087 69.9L278.2 58.6M1087 69.7L285.1 58.6M1087 69.6L292 58.6M1087 69.5L298.9 58.6M1087 69.4L305.8 58.6M1087 69.2L312.7 58.6M1087 69.1L319.6 58.6M1087 68.9L333.4 58.6M1087 68.8L340.4 58.6M1087 68.6L347.3 58.6M1087 68.5L354.2 58.6M1087 68.4L361.1 58.6M1087 68.3L368 58.6M1087 68.2L374.9 58.6M1087 68.1L381.8 58.6M1087 67.9L388.7 58.6M1087 67.7L402.5 58.6M1087 67.6L409.5 58.6M1087 67.5L416.4 58.6M1087 67.4L423.3 58.6M1087 67.3L430.2 58.6M1087 67.2L437.1 58.6M1087 67L444 58.6M1087 66.9L450.9 58.6M1087 66.8L457.9 58.6M1087 66.6L471.7 58.6M1087 66.5L478.6 58.6M1087 66.4L485.5 58.6M1087 66.3L492.5 58.6M1087 66.2L499.4 58.6M1087 66.1L506.3 58.6M1087 66L513.2 58.6M1087 65.9L520.1 58.6M1087 65.8L527.1 58.6M1087 65.5L540.9 58.6M1087 65.4L547.8 58.6M1087 65.3L554.8 58.6M1087 65.2L561.7 58.6M1087 65.1L568.6 58.6M1087 65L575.6 58.6M1087 64.9L582.5 58.6M1087 64.8L589.4 58.6M1087 64.7L596.3 58.6M1087 64.5L610.2 58.6M1087 64.4L617.1 58.6M1087 64.3L624.1 58.6M1087 64.2L631 58.6M1087 64.1L637.9 58.6M1087 64L644.9 58.6M1087 63.9L651.8 58.6M1087 63.8L658.8 58.6M1087 63.7L665.7 58.6M1087 63.5L679.6 58.6M1087 63.5L686.5 58.6M1087 63.4L693.4 58.6M1087 63.3L700.4 58.6M1087 63.2L707.3 58.6M1087 63.1L714.3 58.6M1087 63L721.2 58.6M1087 62.9L728.1 58.6M1087 62.8L735.1 58.6M1087 62.6L749 58.6M1087 62.5L755.9 58.6M1087 62.4L762.9 58.6M1087 62.3L769.8 58.6M1087 62.2L776.8 58.6M1087 62.2L783.7 58.6M1087 62.1L790.7 58.6M1087 62L797.6 58.6M1087 61.9L804.6 58.6M1087 61.7L818.5 58.6M1087 61.6L825.4 58.6M1087 61.5L832.4 58.6M1087 61.4L839.3 58.6M1087 61.4L846.3 58.6M1087 61.3L853.2 58.6M1087 61.2L860.2 58.6M1087 61.1L867.1 58.6M1087 61L874.1 58.6M1087 60.8L888 58.6M1087 60.8L895 58.6M1087 60.7L901.9 58.6M1087 60.6L908.9 58.6M1087 60.5L915.8 58.6M1087 60.4L922.8 58.6M1087 60.3L929.8 58.6M1087 60.3L936.7 58.6M1087 60.2L943.7 58.6M1087 60L957.6 58.6M1087 59.9L964.6 58.6M1087 59.9L971.6 58.6M1087 59.8L978.5 58.6M1087 59.7L985.5 58.6M1087 59.6L992.5 58.6M1087 59.5L999.4 58.6M1087 59.5L1006.4 58.6M1087 59.4L1013.4 58.6M1087 59.2L1027.3 58.6M1087 59.1L1034.3 58.6M1087 59.1L1041.2 58.6M1087 59L1048.2 58.6M1087 58.9L1055.2 58.6M1087 58.8L1062.2 58.6M1087 58.8L1069.1 58.6M1087 58.7L1076.1 58.6M1087 58.6L1083.1 58.6" stroke="#5e5e5e" stroke-opacity="0.50" stroke-width="2.70"/></g>
<g mask="url(#mc)"><path d="M-5 21.6L-3 21.6M-5 21.6L2.1 21.6M-5 21.6L4.7 21.6M-5 21.6L7.3 21.6M-5 21.6L9.8 21.6M-5 21.6L12.4 21.6M-5 21.6L14.9 21.6M-5 21.6L17.5 21.6M-5 21.6L20.1 21.6M-5 21.6L22.6 21.6M-5 21.6L27.7 21.6M-5 21.6L30.3 21.6M-5 21.7L32.9 21.6M-5 21.7L35.5 21.6M-5 21.7L38 21.6M-5 21.7L40.6 21.6M-5 21.7L43.2 21.6M-5 21.7L45.7 21.6M-5 21.7L48.3 21.6M-5 21.7L53.5 21.6M-5 21.7L56.1 21.6M-5 21.7L58.6 21.6M-5 21.7L61.2 21.6M-5 21.7L63.8 21.6M-5 21.7L66.4 21.6M-5 21.7L69 21.6M-5 21.8L71.5 21.6M-5 21.8L74.1 21.6M-5 21.8L79.3 21.6M-5 21.8L81.9 21.6M-5 21.8L84.5 21.6M-5 21.8L87.1 21.6M-5 21.8L89.7 21.6M-5 21.8L92.3 21.6M-5 21.8L94.9 21.6M-5 21.8L97.5 21.6M-5 21.8L100.1 21.6M-5 21.8L105.3 21.6M-5 21.8L107.9 21.6M-5 21.9L110.5 21.6M-5 21.9L113.1 21.6M-5 21.9L115.7 21.6M-5 21.9L118.3 21.6M-5 21.9L120.9 21.6M-5 21.9L123.5 21.6M-5 21.9L126.1 21.6M-5 21.9L131.3 21.6M-5 21.9L133.9 21.6M-5 21.9L136.6 21.6M-5 21.9L139.2 21.6M-5 21.9L141.8 21.6M-5 22L144.4 21.6M-5 22L147 21.6M-5 22L149.6 21.6M-5 22L152.3 21.6M-5 22L157.5 21.6M-5 22L160.1 21.6M-5 22L162.8 21.6M-5 22L165.4 21.6M-5 22L168 21.6M-5 22L170.6 21.6M-5 22L173.3 21.6M-5 22L175.9 21.6M-5 22.1L178.5 21.6M-5 22.1L183.8 21.6M-5 22.1L186.4 21.6M-5 22.1L189.1 21.6M-5 22.1L191.7 21.6M-5 22.1L194.4 21.6M-5 22.1L197 21.6M-5 22.1L199.6 21.6M-5 22.1L202.3 21.6M-5 22.1L204.9 21.6M-5 22.2L210.2 21.6M-5 22.2L212.9 21.6M-5 22.2L215.5 21.6M-5 22.2L218.2 21.6M-5 22.2L220.8 21.6M-5 22.2L223.5 21.6M-5 22.2L226.1 21.6M-5 22.2L228.8 21.6M-5 22.2L231.5 21.6M-5 22.2L236.8 21.6M-5 22.2L239.4 21.6M-5 22.3L242.1 21.6M-5 22.3L244.8 21.6M-5 22.3L247.4 21.6M-5 22.3L250.1 21.6M-5 22.3L252.8 21.6M-5 22.3L255.4 21.6M-5 22.3L258.1 21.6M-5 22.3L263.4 21.6M-5 22.3L266.1 21.6M-5 22.3L268.8 21.6M-5 22.4L271.4 21.6M-5 22.4L274.1 21.6M-5 22.4L276.8 21.6M-5 22.4L279.5 21.6M-5 22.4L282.2 21.6M-5 22.4L284.8 21.6M-5 22.4L290.2 21.6M-5 22.4L292.9 21.6M-5 22.4L295.6 21.6M-5 22.5L298.3 21.6M-5 22.5L301 21.6M-5 22.5L303.6 21.6M-5 22.5L306.3 21.6M-5 22.5L309 21.6M-5 22.5L311.7 21.6M-5 22.5L317.1 21.6M-5 22.5L319.8 21.6M-5 22.5L322.5 21.6M-5 22.6L325.2 21.6M-5 22.6L327.9 21.6M-5 22.6L330.6 21.6M-5 22.6L333.3 21.6M-5 22.6L336 21.6M-5 22.6L338.7 21.6M-5 22.6L344.1 21.6M-5 22.6L346.8 21.6M-5 22.7L349.5 21.6M-5 22.7L352.3 21.6M-5 22.7L355 21.6M-5 22.7L357.7 21.6M-5 22.7L360.4 21.6M-5 22.7L363.1 21.6M-5 22.7L365.8 21.6M-5 22.7L371.3 21.6M-5 22.8L374 21.6M-5 22.8L376.7 21.6M-5 22.8L379.4 21.6M-5 22.8L382.2 21.6M-5 22.8L384.9 21.6M-5 22.8L387.6 21.6M-5 22.8L390.3 21.6M-5 22.8L393.1 21.6M-5 22.9L398.5 21.6M-5 22.9L401.3 21.6M-5 22.9L404 21.6M-5 22.9L406.7 21.6M-5 22.9L409.5 21.6M-5 22.9L412.2 21.6M-5 22.9L415 21.6M-5 22.9L417.7 21.6M-5 23L420.4 21.6M-5 23L425.9 21.6M-5 23L428.7 21.6M-5 23L431.4 21.6M-5 23L434.2 21.6M-5 23L436.9 21.6M-5 23L439.7 21.6M-5 23.1L442.4 21.6M-5 23.1L445.2 21.6M-5 23.1L447.9 21.6M-5 23.1L453.5 21.6M-5 23.1L456.2 21.6M-5 23.1L459 21.6M-5 23.2L461.7 21.6M-5 23.2L464.5 21.6M-5 23.2L467.3 21.6M-5 23.2L470 21.6M-5 23.2L472.8 21.6M-5 23.2L475.6 21.6M-5 23.2L481.1 21.6M-5 23.3L483.9 21.6M-5 23.3L486.6 21.6M-5 23.3L489.4 21.6M-5 23.3L492.2 21.6M-5 23.3L495 21.6M-5 23.3L497.8 21.6M-5 23.4L500.5 21.6M-5 23.4L503.3 21.6M-5 23.4L508.9 21.6M-5 23.4L511.7 21.6M-5 23.4L514.4 21.6M-5 23.4L517.2 21.6M-5 23.5L520 21.6M-5 23.5L522.8 21.6M-5 23.5L525.6 21.6M-5 23.5L528.4 21.6M-5 23.5L531.2 21.6M-5 23.6L536.8 21.6M-5 23.6L539.6 21.6M-5 23.6L542.4 21.6M-5 23.6L545.2 21.6M-5 23.6L548 21.6M-5 23.6L550.8 21.6M-5 23.6L553.6 21.6M-5 23.7L556.4 21.6M-5 23.7L559.2 21.6M-5 23.7L564.8 21.6M-5 23.7L567.6 21.6M-5 23.8L570.4 21.6M-5 23.8L573.2 21.6M-5 23.8L576.1 21.6M-5 23.8L578.9 21.6M-5 23.8L581.7 21.6M-5 23.8L584.5 21.6M-5 23.9L587.3 21.6M-5 23.9L593 21.6M-5 23.9L595.8 21.6M-5 23.9L598.6 21.6M-5 23.9L601.4 21.6M-5 24L604.3 21.6M-5 24L607.1 21.6M-5 24L609.9 21.6M-5 24L612.8 21.6M-5 24L615.6 21.6M-5 24.1L621.3 21.6M-5 24.1L624.1 21.6M-5 24.1L626.9 21.6M-5 24.1L629.8 21.6M-5 24.2L632.6 21.6M-5 24.2L635.5 21.6M-5 24.2L638.3 21.6M-5 24.2L641.1 21.6M-5 24.2L644 21.6M-5 24.3L649.7 21.6M-5 24.3L652.5 21.6M-5 24.3L655.4 21.6M-5 24.3L658.2 21.6M-5 24.4L661.1 21.6M-5 24.4L663.9 21.6M-5 24.4L666.8 21.6M-5 24.4L669.7 21.6M-5 24.5L672.5 21.6M-5 24.5L678.2 21.6M-5 24.5L681.1 21.6M-5 24.5L684 21.6M-5 24.6L686.8 21.6M-5 24.6L689.7 21.6M-5 24.6L692.6 21.6M-5 24.6L695.4 21.6M-5 24.7L698.3 21.6M-5 24.7L701.2 21.6M-5 24.7L706.9 21.6M-5 24.8L709.8 21.6M-5 24.8L712.7 21.6M-5 24.8L715.6 21.6M-5 24.8L718.4 21.6M-5 24.9L721.3 21.6M-5 24.9L724.2 21.6M-5 24.9L727.1 21.6M-5 24.9L730 21.6M-5 25L735.8 21.6M-5 25L738.6 21.6M-5 25L741.5 21.6M-5 25.1L744.4 21.6M-5 25.1L747.3 21.6M-5 25.1L750.2 21.6M-5 25.1L753.1 21.6M-5 25.2L756 21.6M-5 25.2L758.9 21.6M-5 25.3L764.7 21.6M-5 25.3L767.6 21.6M-5 25.3L770.5 21.6M-5 25.3L773.4 21.6M-5 25.4L776.3 21.6M-5 25.4L779.2 21.6M-5 25.4L782.2 21.6M-5 25.5L785.1 21.6M-5 25.5L788 21.6M-5 25.6L793.8 21.6M-5 25.6L796.7 21.6M-5 25.6L799.6 21.6M-5 25.6L802.6 21.6M-5 25.7L805.5 21.6M-5 25.7L808.4 21.6M-5 25.7L811.3 21.6M-5 25.8L814.3 21.6M-5 25.8L817.2 21.6M-5 25.9L823 21.6M-5 25.9L826 21.6M-5 25.9L828.9 21.6M-5 26L831.8 21.6M-5 26L834.8 21.6M-5 26.1L837.7 21.6M-5 26.1L840.6 21.6M-5 26.1L843.6 21.6M-5 26.2L846.5 21.6M-5 26.2L852.4 21.6M-5 26.3L855.4 21.6M-5 26.3L858.3 21.6M-5 26.3L861.3 21.6M-5 26.4L864.2 21.6M-5 26.4L867.2 21.6M-5 26.5L870.1 21.6M-5 26.5L873.1 21.6M-5 26.5L876 21.6M-5 26.6L881.9 21.6M-5 26.7L884.9 21.6M-5 26.7L887.8 21.6M-5 26.7L890.8 21.6M-5 26.8L893.8 21.6M-5 26.8L896.7 21.6M-5 26.9L899.7 21.6M-5 26.9L902.7 21.6M-5 27L905.6 21.6M-5 27.1L911.6 21.6M-5 27.1L914.6 21.6M-5 27.1L917.5 21.6M-5 27.2L920.5 21.6M-5 27.2L923.5 21.6M-5 27.3L926.5 21.6M-5 27.3L929.4 21.6M-5 27.4L932.4 21.6M-5 27.4L935.4 21.6M-5 27.5L941.4 21.6M-5 27.6L944.4 21.6M-5 27.6L947.3 21.6M-5 27.7L950.3 21.6M-5 27.7L953.3 21.6M-5 27.8L956.3 21.6M-5 27.8L959.3 21.6M-5 27.9L962.3 21.6M-5 28L965.3 21.6M-5 28.1L971.3 21.6M-5 28.1L974.3 21.6M-5 28.2L977.3 21.6M-5 28.2L980.3 21.6M-5 28.3L983.3 21.6M-5 28.4L986.3 21.6M-5 28.4L989.3 21.6M-5 28.5L992.3 21.6M-5 28.5L995.4 21.6M-5 28.7L1001.4 21.6M-5 28.7L1004.4 21.6M-5 28.8L1007.4 21.6M-5 28.9L1010.4 21.6M-5 28.9L1013.5 21.6M-5 29L1016.5 21.6M-5 29.1L1019.5 21.6M-5 29.1L1022.5 21.6M-5 29.2L1025.6 21.6M-5 29.4L1031.6 21.6M-5 29.4L1034.6 21.6M-5 29.5L1037.7 21.6M-5 29.6L1040.7 21.6M-5 29.7L1043.7 21.6M-5 29.7L1046.8 21.6M-5 29.8L1049.8 21.6M-5 29.9L1052.9 21.6M-5 30L1055.9 21.6M-5 30.1L1062 21.6M-5 30.2L1065 21.6M-5 30.3L1068.1 21.6M-5 30.4L1071.1 21.6M-5 30.5L1074.2 21.6M-5 30.6L1077.2 21.6M-5 30.7L1080.3 21.6M-5 30.7L1083.3 21.6M-5 30.8L1086.4 21.6M-5 31L1087 21.6M-5 31.1L1087 21.6M-5 31.2L1087 21.7M-5 31.3L1087 21.7M-5 31.4L1087 21.7M-5 31.5L1087 21.7M-5 31.6L1087 21.8M-5 31.7L1087 21.8M-5 31.9L1087 21.8M-5 32.1L1087 21.9M-5 32.2L1087 21.9M-5 32.3L1087 22M-5 32.4L1087 22M-5 32.5L1087 22M-5 32.7L1087 22.1M-5 32.8L1087 22.1M-5 32.9L1087 22.1M-5 33.1L1087 22.2M-5 33.3L1087 22.2M-5 33.5L1087 22.3M-5 33.6L1087 22.3M-5 33.7L1087 22.4M-5 33.9L1087 22.4M-5 34L1087 22.4M-5 34.2L1087 22.5M-5 34.3L1087 22.5M-5 34.5L1087 22.6M-5 34.8L1087 22.7M-5 35L1087 22.7M-5 35.1L1087 22.7M-5 35.3L1087 22.8M-5 35.5L1087 22.8M-5 35.7L1087 22.9M-5 35.8L1087 22.9M-5 36L1087 23M-5 36.2L1087 23M-5 36.6L1087 23.2M-5 36.8L1087 23.2M-5 37L1087 23.3M-5 37.2L1087 23.3M-5 37.5L1087 23.4M-5 37.7L1087 23.4M-5 37.9L1087 23.5M-5 38.1L1087 23.6M-5 38.4L1087 23.6M-5 38.9L1087 23.8M-5 39.1L1087 23.9M-5 39.4L1087 23.9M-5 39.7L1087 24M-5 40L1087 24.1M-5 40.2L1087 24.2M-5 40.5L1087 24.2M-5 40.8L1087 24.3M-5 41.1L1087 24.4M-5 41.8L1087 24.6M-5 42.1L1087 24.7M-5 42.5L1087 24.8M-5 42.8L1087 24.9M-5 43.2L1087 25M-5 43.6L1087 25.1M-5 44L1087 25.2M-5 44.4L1087 25.3M-5 44.8L1087 25.4M-5 45.7L1087 25.7M-5 46.1L1087 25.8M-5 46.6L1087 25.9M-5 47.1L1087 26.1M-5 47.6L1087 26.2M-5 48.1L1087 26.3M-5 48.7L1087 26.5M-5 49.3L1087 26.6M-5 49.8L1087 26.8M-5 51.1L1087 27.2M-5 51.8L1087 27.3M-5 52.4L1087 27.5M-5 53.2L1087 27.7M-5 53.9L1087 27.9M-5 54.7L1087 28.2M-5 55.5L1087 28.4M-5 56.4L1087 28.6M-5 57.3L1087 28.9M-5 59.2L1087 29.4M-5 60.2L1087 29.7M-5 61.3L1087 30M-5 62.5L1087 30.3M-5 63.7L1087 30.6M-5 65L1087 31M-5 66.3L1087 31.4M-5 67.8L1087 31.8M-5 69.3L1087 32.2M-5 72.7L1087 33.1M-5 74.5L1087 33.6M-5 76.5L1087 34.2M-5 78.6L1087 34.8M-5 80.9L1087 35.4M-5 83.4L1087 36.1M-5 86.1L1087 36.8M-5 89L1087 37.6M-5 92.2L1087 38.5M-5 99.4L1087 40.5M-5 103.7L1087 41.7M-5 108.3L1087 43M-5 113.5L1087 44.4M-5 119.4L1087 46M-5 126L1087 47.8M-5 133.5L1087 49.9M-5 142.2L1087 52.3M-5 152.3L1087 55.1M-5 178.3L1087 62.3M-5 195.6L1087 67.1M-5 217L1087 73M-5 244.3L1087 80.5M-5 280.3L1087 90.5M-5 330L1087 104.2M-5 403L1087 124.4M-5 520.6L1087 156.9M-5 741.7L1087 218M1087 649.2L-5 459.8M1087 506.4L-5 360M1087 416.3L-5 296.9M1087 354.3L-5 253.6M1087 309L-5 221.9M1087 274.5L-5 197.7M1087 247.2L-5 178.7M1087 225.3L-5 163.3M1087 207.1L-5 150.6M1087 179L-5 130.9M1087 167.8L-5 123.1M1087 158.1L-5 116.3M1087 149.6L-5 110.4M1087 142L-5 105.1M1087 135.3L-5 100.4M1087 129.3L-5 96.2M1087 123.8L-5 92.3M1087 118.9L-5 88.9M1087 110.3L-5 82.9M1087 106.5L-5 80.2M1087 103L-5 77.8M1087 99.8L-5 75.6M1087 96.8L-5 73.5M1087 94.1L-5 71.5M1087 91.5L-5 69.7M1087 89.1L-5 68M1087 86.8L-5 66.5M1087 82.7L-5 63.6M1087 80.8L-5 62.3M1087 79.1L-5 61M1087 77.4L-5 59.9M1087 75.8L-5 58.8M1087 74.3L-5 57.7M1087 72.9L-5 56.7M1087 71.5L-5 55.8M1087 70.2L-5 54.9M1087 67.8L-5 53.2M1087 66.7L-5 52.4M1087 65.6L-5 51.7M1087 64.6L-5 50.9M1087 63.6L-5 50.3M1087 62.7L-5 49.6M1087 61.8L-5 49M1087 60.9L-5 48.4M1087 60.1L-5 47.8M1087 58.5L-5 46.7M1087 57.8L-5 46.2M1087 57.1L-5 45.7M1087 56.4L-5 45.2M1087 55.7L-5 44.7M1087 55.1L-5 44.3M1087 54.4L-5 43.8M1087 53.8L-5 43.4M1087 53.3L-5 43M1087 52.2L-5 42.2M1087 51.6L-5 41.9M1087 51.1L-5 41.5M1087 50.6L-5 41.2M1087 50.1L-5 40.8M1087 49.7L-5 40.5M1087 49.2L-5 40.2M1087 48.8L-5 39.9M1087 48.3L-5 39.6M1087 47.5L-5 39M1087 47.1L-5 38.7M1087 46.7L-5 38.4M1087 46.4L-5 38.2M1087 46L-5 37.9M1087 45.6L-5 37.7M1087 45.3L-5 37.4M1087 45L-5 37.2M1087 44.6L-5 37M1087 44L-5 36.5M1087 43.7L-5 36.3M1087 43.4L-5 36.1M1087 43.1L-5 35.9M1087 42.8L-5 35.7M1087 42.5L-5 35.5M1087 42.3L-5 35.3M1087 42L-5 35.1M1087 41.7L-5 34.9M1087 41.2L-5 34.6M1087 41L-5 34.4M1087 40.7L-5 34.2M1087 40.5L-5 34.1M1087 40.3L-5 33.9M1087 40.1L-5 33.8M1087 39.8L-5 33.6M1087 39.6L-5 33.5M1087 39.4L-5 33.3M1087 39L-5 33M1087 38.8L-5 32.9M1087 38.6L-5 32.7M1087 38.4L-5 32.6M1087 38.2L-5 32.5M1087 38L-5 32.3M1087 37.9L-5 32.2M1087 37.7L-5 32.1M1087 37.5L-5 32M1087 37.2L-5 31.7M1087 37L-5 31.6M1087 36.8L-5 31.5M1087 36.7L-5 31.4M1087 36.5L-5 31.3M1087 36.4L-5 31.2M1087 36.2L-5 31.1M1087 36L-5 31M1087 35.9L-5 30.9M1087 35.6L-5 30.7M1087 35.5L-5 30.6M1087 35.3L-5 30.5M1087 35.2L-5 30.4M1087 35.1L-5 30.3M1087 34.9L-5 30.2M1087 34.8L-5 30.1M1087 34.7L-5 30M1087 34.5L-5 29.9M1087 34.3L-5 29.7M1087 34.2L-5 29.7M1087 34.1L-5 29.6M1087 33.9L-5 29.5M1087 33.8L-5 29.4M1087 33.7L-5 29.3M1087 33.6L-5 29.3M1087 33.5L-5 29.2M1087 33.4L-5 29.1M1087 33.2L-5 28.9M1087 33.1L-5 28.9M1087 33L-5 28.8M1087 32.9L-5 28.7M1087 32.8L-5 28.7M1087 32.7L-5 28.6M1087 32.6L-5 28.5M1087 32.5L-5 28.5M1087 32.4L-5 28.4M1087 32.2L-5 28.3M1087 32.1L-5 28.2M1087 32L-5 28.1M1087 31.9L-5 28.1M1087 31.8L-5 28M1087 31.8L-5 28M1087 31.7L-5 27.9M1087 31.6L-5 27.8M1087 31.5L-5 27.8M1087 31.3L-5 27.7M1087 31.3L-5 27.6M1087 31.2L-5 27.5M1087 31.1L-5 27.5M1087 31L-5 27.4M1087 30.9L-5 27.4M1087 30.9L-5 27.3M1087 30.8L-5 27.3M1087 30.7L-5 27.2M1087 30.6L-5 27.1M1087 30.5L-5 27.1M1087 30.4L-5 27M1087 30.4L-5 27M1087 30.3L-5 26.9M1087 30.2L-5 26.9M1087 30.2L-5 26.8M1087 30.1L-5 26.8M1087 30L-5 26.7M1087 29.9L-5 26.7M1087 29.8L-5 26.6M1087 29.8L-5 26.6M1087 29.7L-5 26.5M1087 29.6L-5 26.5M1087 29.6L-5 26.4M1087 29.5L-5 26.4M1087 29.5L-5 26.4M1087 29.4L-5 26.3M1087 29.3L-5 26.2M1087 29.2L-5 26.2M1087 29.2L-5 26.1M1087 29.1L-5 26.1M1087 29.1L-5 26.1M1087 29L-5 26M1087 28.9L-5 26M1087 28.9L-5 26M1087 28.8L-5 25.9M1087 28.7L-5 25.8M1087 28.7L-5 25.8M1087 28.6L-5 25.8M1087 28.6L-5 25.7M1087 28.5L-5 25.7M1087 28.5L-5 25.7M1087 28.4L-5 25.6M1087 28.4L-5 25.6M1087 28.3L-5 25.6M1087 28.2L-5 25.5M1087 28.2L-5 25.5M1087 28.1L-5 25.4M1087 28.1L-5 25.4M1087 28.1L-5 25.4M1087 28L-5 25.3M1087 28L-5 25.3M1087 27.9L-5 25.3M1087 27.9L-5 25.2M1087 27.8L-5 25.2M1087 27.7L-5 25.1M1087 27.7L-5 25.1M1087 27.7L-5 25.1M1087 27.6L-5 25.1M1087 27.6L-5 25M1087 27.5L-5 25M1087 27.5L-5 25M1087 27.5L-5 24.9M1087 27.4L-5 24.9M1087 27.3L-5 24.9M1087 27.3L-5 24.8M1087 27.3L-5 24.8M1087 27.2L-5 24.8M1087 27.2L-5 24.8M1087 27.1L-5 24.7M1087 27.1L-5 24.7M1087 27.1L-5 24.7M1087 27L-5 24.6M1087 27L-5 24.6M1087 26.9L-5 24.6M1087 26.9L-5 24.5M1087 26.8L-5 24.5M1087 26.8L-5 24.5M1087 26.8L-5 24.5M1087 26.7L-5 24.5M1087 26.7L-5 24.4M1087 26.6L-5 24.4M1087 26.6L-5 24.4M1087 26.6L-5 24.3M1087 26.5L-5 24.3M1087 26.5L-5 24.3M1087 26.5L-5 24.3M1087 26.4L-5 24.2M1087 26.4L-5 24.2M1087 26.4L-5 24.2M1087 26.3L-5 24.2M1087 26.3L-5 24.1M1087 26.3L-5 24.1M1087 26.2L-5 24.1M1087 26.2L-5 24.1M1087 26.2L-5 24M1087 26.1L-5 24M1087 26.1L-5 24M1087 26.1L-5 24M1087 26L-5 23.9M1087 26L-5 23.9M1087 26L-5 23.9M1087 25.9L-5 23.9M1087 25.9L-5 23.9M1087 25.9L-5 23.8M1087 25.9L-5 23.8M1087 25.8L-5 23.8M1087 25.8L-5 23.8M1087 25.7L-5 23.7M1087 25.7L-5 23.7M1087 25.7L-5 23.7M1087 25.7L-5 23.7M1087 25.6L-5 23.7M1087 25.6L-5 23.7M1087 25.6L-5 23.6M1087 25.6L-5 23.6M1087 25.5L-5 23.6M1087 25.5L-5 23.6M1087 25.5L-5 23.6M1087 25.4L-5 23.5M1087 25.4L-5 23.5M1087 25.4L-5 23.5M1087 25.4L-5 23.5M1087 25.3L-5 23.5M1087 25.3L-5 23.4M1087 25.3L-5 23.4M1087 25.2L-5 23.4M1087 25.2L-5 23.4M1087 25.2L-5 23.4M1087 25.2L-5 23.3M1087 25.1L-5 23.3M1087 25.1L-5 23.3M1087 25.1L-5 23.3M1087 25.1L-5 23.3M1087 25.1L-5 23.3M1087 25L-5 23.2M1087 25L-5 23.2M1087 25L-5 23.2M1087 24.9L-5 23.2M1087 24.9L-5 23.2M1087 24.9L-5 23.2M1087 24.9L-5 23.1M1087 24.9L-5 23.1M1087 24.8L-5 23.1M1087 24.8L-5 23.1M1087 24.8L-5 23.1M1087 24.8L-5 23.1M1087 24.7L-5 23M1087 24.7L-5 23M1087 24.7L-5 23M1087 24.7L-5 23M1087 24.7L-5 23M1087 24.6L-5 23M1087 24.6L-5 23M1087 24.6L-5 22.9M1087 24.6L-5 22.9M1087 24.5L-5 22.9M1087 24.5L-5 22.9M1087 24.5L-5 22.9M1087 24.5L-5 22.9M1087 24.5L-5 22.9M1087 24.4L-5 22.8M1087 24.4L-5 22.8M1087 24.4L-5 22.8M1087 24.4L-5 22.8M1087 24.4L-5 22.8M1087 24.3L-5 22.8M1087 24.3L-5 22.8M1087 24.3L-5 22.7M1087 24.3L-5 22.7M1087 24.3L-5 22.7M1087 24.2L-5 22.7M1087 24.2L-5 22.7M1087 24.2L-5 22.7M1087 24.2L-5 22.7M1087 24.2L-5 22.6M1087 24.1L-5 22.6M1087 24.1L-5 22.6M1087 24.1L-5 22.6M1087 24.1L-5 22.6M1087 24.1L-5 22.6M1087 24L-5 22.6M1087 24L-5 22.6M1087 24L-5 22.5M1087 24L-5 22.5M1087 24L-5 22.5M1087 24L-5 22.5M1087 24L-5 22.5M1087 23.9L-5 22.5M1087 23.9L-5 22.5M1087 23.9L-5 22.5M1087 23.9L-5 22.4M1087 23.9L-5 22.4M1087 23.8L-5 22.4M1087 23.8L-5 22.4M1087 23.8L-5 22.4M1087 23.8L-5 22.4M1087 23.8L-5 22.4M1087 23.8L-5 22.4M1087 23.7L-5 22.3M1087 23.7L-5 22.3M1087 23.7L-5 22.3M1087 23.7L-5 22.3M1087 23.7L-5 22.3M1087 23.7L-5 22.3M1087 23.7L-5 22.3M1087 23.6L-5 22.3M1087 23.6L-5 22.3M1087 23.6L-5 22.3M1087 23.6L-5 22.2M1087 23.6L-5 22.2M1087 23.6L-5 22.2M1087 23.5L-5 22.2M1087 23.5L-5 22.2M1087 23.5L-5 22.2M1087 23.5L-5 22.2M1087 23.5L-5 22.2M1087 23.5L-5 22.2M1087 23.5L-5 22.1M1087 23.4L-5 22.1M1087 23.4L-5 22.1M1087 23.4L-5 22.1M1087 23.4L-5 22.1M1087 23.4L-5 22.1M1087 23.4L-5 22.1M1087 23.3L-5 22.1M1087 23.3L-5 22.1M1087 23.3L-5 22.1M1087 23.3L-5 22M1087 23.3L-5 22M1087 23.3L-5 22M1087 23.3L-5 22M1087 23.3L-5 22M1087 23.2L-5 22M1087 23.2L-5 22M1087 23.2L-5 22M1087 23.2L-5 22M1087 23.2L-5 22M1087 23.2L-5 22M1087 23.2L-5 21.9M1087 23.2L-5 21.9M1087 23.1L-5 21.9M1087 23.1L-5 21.9M1087 23.1L-5 21.9M1087 23.1L-5 21.9M1087 23.1L-5 21.9M1087 23.1L-5 21.9M1087 23.1L-5 21.9M1087 23L-5 21.9M1087 23L-5 21.9M1087 23L-5 21.9M1087 23L-5 21.8M1087 23L-5 21.8M1087 23L-5 21.8M1087 23L-5 21.8M1087 23L-5 21.8M1087 23L-5 21.8M1087 22.9L-5 21.8M1087 22.9L-5 21.8M1087 22.9L-5 21.8M1087 22.9L-5 21.8M1087 22.9L-5 21.8M1087 22.9L-5 21.7M1087 22.9L-5 21.7M1087 22.9L-5 21.7M1087 22.8L-5 21.7M1087 22.8L-5 21.7M1087 22.8L-5 21.7M1087 22.8L-5 21.7M1087 22.8L-5 21.7M1087 22.8L-5 21.7M1087 22.8L-5 21.7M1087 22.8L-5 21.7M1087 22.8L-5 21.7M1087 22.7L-5 21.7M1087 22.7L-5 21.6M1087 22.7L-5 21.6M1087 22.7L-5 21.6M1087 22.7L-5 21.6M1087 22.7L-5 21.6M1087 22.7L-5 21.6M1087 22.7L-5 21.6M1087 22.7L-5 21.6M1087 22.6L-5 21.6M1087 22.6L-5 21.6M1087 22.6L-5 21.6M1087 22.6L-5 21.6M1087 22.6L-0.5 21.6M1087 22.6L13 21.6M1087 22.6L19.8 21.6M1087 22.6L26.6 21.6M1087 22.6L33.4 21.6M1087 22.6L40.3 21.6M1087 22.5L47.1 21.6M1087 22.5L53.9 21.6M1087 22.5L60.8 21.6M1087 22.5L67.6 21.6M1087 22.5L81.4 21.6M1087 22.5L88.2 21.6M1087 22.5L95.1 21.6M1087 22.5L102 21.6M1087 22.5L108.9 21.6M1087 22.5L115.8 21.6M1087 22.4L122.8 21.6M1087 22.4L129.7 21.6M1087 22.4L136.6 21.6M1087 22.4L150.5 21.6M1087 22.4L157.5 21.6M1087 22.4L164.4 21.6M1087 22.4L171.4 21.6M1087 22.4L178.4 21.6M1087 22.4L185.4 21.6M1087 22.4L192.4 21.6M1087 22.4L199.4 21.6M1087 22.3L206.4 21.6M1087 22.3L220.5 21.6M1087 22.3L227.5 21.6M1087 22.3L234.6 21.6M1087 22.3L241.6 21.6M1087 22.3L248.7 21.6M1087 22.3L255.8 21.6M1087 22.3L262.9 21.6M1087 22.3L270 21.6M1087 22.3L277.1 21.6M1087 22.3L291.3 21.6M1087 22.2L298.4 21.6M1087 22.2L305.6 21.6M1087 22.2L312.7 21.6M1087 22.2L319.9 21.6M1087 22.2L327 21.6M1087 22.2L334.2 21.6M1087 22.2L341.4 21.6M1087 22.2L348.6 21.6M1087 22.2L363 21.6M1087 22.2L370.2 21.6M1087 22.2L377.4 21.6M1087 22.2L384.6 21.6M1087 22.1L391.9 21.6M1087 22.1L399.1 21.6M1087 22.1L406.4 21.6M1087 22.1L413.6 21.6M1087 22.1L420.9 21.6M1087 22.1L435.5 21.6M1087 22.1L442.8 21.6M1087 22.1L450.1 21.6M1087 22.1L457.4 21.6M1087 22.1L464.8 21.6M1087 22.1L472.1 21.6M1087 22.1L479.4 21.6M1087 22L486.8 21.6M1087 22L494.2 21.6M1087 22L508.9 21.6M1087 22L516.3 21.6M1087 22L523.7 21.6M1087 22L531.1 21.6M1087 22L538.5 21.6M1087 22L546 21.6M1087 22L553.4 21.6M1087 22L560.9 21.6M1087 22L568.3 21.6M1087 22L583.2 21.6M1087 22L590.7 21.6M1087 21.9L598.2 21.6M1087 21.9L605.7 21.6M1087 21.9L613.2 21.6M1087 21.9L620.8 21.6M1087 21.9L628.3 21.6M1087 21.9L635.8 21.6M1087 21.9L643.4 21.6M1087 21.9L658.5 21.6M1087 21.9L666.1 21.6M1087 21.9L673.7 21.6M1087 21.9L681.2 21.6M1087 21.9L688.9 21.6M1087 21.9L696.5 21.6M1087 21.9L704.1 21.6M1087 21.8L711.7 21.6M1087 21.8L719.4 21.6M1087 21.8L734.7 21.6M1087 21.8L742.3 21.6M1087 21.8L750 21.6M1087 21.8L757.7 21.6M1087 21.8L765.4 21.6M1087 21.8L773.1 21.6M1087 21.8L780.8 21.6M1087 21.8L788.6 21.6M1087 21.8L796.3 21.6M1087 21.8L811.8 21.6M1087 21.8L819.6 21.6M1087 21.8L827.4 21.6M1087 21.7L835.1 21.6M1087 21.7L842.9 21.6M1087 21.7L850.7 21.6M1087 21.7L858.6 21.6M1087 21.7L866.4 21.6M1087 21.7L874.2 21.6M1087 21.7L889.9 21.6M1087 21.7L897.8 21.6M1087 21.7L905.7 21.6M1087 21.7L913.5 21.6M1087 21.7L921.4 21.6M1087 21.7L929.3 21.6M1087 21.7L937.3 21.6M1087 21.7L945.2 21.6M1087 21.7L953.1 21.6M1087 21.6L969 21.6M1087 21.6L977 21.6M1087 21.6L985 21.6M1087 21.6L993 21.6M1087 21.6L1000.9 21.6M1087 21.6L1009 21.6M1087 21.6L1017 21.6M1087 21.6L1025 21.6M1087 21.6L1033 21.6M1087 21.6L1049.1 21.6M1087 21.6L1057.2 21.6M1087 21.6L1065.3 21.6M1087 21.6L1073.4 21.6M1087 21.6L1081.5 21.6" stroke="#686868" stroke-opacity="0.50" stroke-width="2.70"/></g>
<g mask="url(#mh)"><path d="M-5 20.1L-4.7 20.1M-5 20.1L7.3 20.1M-5 20.1L19.5 20.1M-5 20.1L31.6 20.1M-5 20.1L43.9 20.1M-5 20.1L56.2 20.1M-5 20.2L68.5 20.1M-5 20.2L80.9 20.1M-5 20.2L93.3 20.1M-5 20.2L105.8 20.1M-5 20.2L118.3 20.1M-5 20.3L130.9 20.1M-5 20.3L143.5 20.1M-5 20.3L156.2 20.1M-5 20.3L168.9 20.1M-5 20.4L181.7 20.1M-5 20.4L194.5 20.1M-5 20.4L207.4 20.1M-5 20.4L220.4 20.1M-5 20.4L233.4 20.1M-5 20.5L246.4 20.1M-5 20.5L259.5 20.1M-5 20.5L272.7 20.1M-5 20.6L285.9 20.1M-5 20.6L299.2 20.1M-5 20.6L312.5 20.1M-5 20.6L325.9 20.1M-5 20.7L339.4 20.1M-5 20.7L352.9 20.1M-5 20.7L366.4 20.1M-5 20.8L380 20.1M-5 20.8L393.7 20.1M-5 20.8L407.4 20.1M-5 20.9L421.2 20.1M-5 20.9L435.1 20.1M-5 20.9L449 20.1M-5 21L462.9 20.1M-5 21L477 20.1M-5 21.1L491 20.1M-5 21.1L505.2 20.1M-5 21.2L519.4 20.1M-5 21.2L533.7 20.1M-5 21.2L548 20.1M-5 21.3L562.4 20.1M-5 21.3L576.9 20.1M-5 21.4L591.4 20.1M-5 21.5L606 20.1M-5 21.5L620.6 20.1M-5 21.6L635.3 20.1M-5 21.6L650.1 20.1M-5 21.7L665 20.1M-5 21.8L679.9 20.1M-5 21.8L694.9 20.1M-5 21.9L709.9 20.1M-5 22L725 20.1M-5 22.1L740.2 20.1M-5 22.1L755.4 20.1M-5 22.2L770.7 20.1M-5 22.3L786.1 20.1M-5 22.4L801.6 20.1M-5 22.5L817.1 20.1M-5 22.6L832.7 20.1M-5 22.7L848.4 20.1M-5 22.8L864.1 20.1M-5 23L879.9 20.1M-5 23.1L895.8 20.1M-5 23.2L911.8 20.1M-5 23.4L927.8 20.1M-5 23.5L943.9 20.1M-5 23.7L960.1 20.1M-5 23.9L976.3 20.1M-5 24.1L992.6 20.1M-5 24.3L1009.1 20.1M-5 24.5L1025.5 20.1M-5 24.7L1042.1 20.1M-5 25L1058.7 20.1M-5 25.2L1075.4 20.1M-5 25.5L1087 20.1M-5 25.8L1087 20.2M-5 26.2L1087 20.3M-5 26.6L1087 20.4M-5 27L1087 20.5M-5 27.5L1087 20.6M-5 28L1087 20.8M-5 28.6L1087 20.9M-5 29.3L1087 21.1M-5 30L1087 21.3M-5 30.9L1087 21.6M-5 32L1087 21.9M-5 33.2L1087 22.2M-5 34.6L1087 22.6M-5 36.4L1087 23.1M-5 38.6L1087 23.7M-5 41.5L1087 24.5M-5 45.2L1087 25.5M-5 50.5L1087 27M-5 58.2L1087 29.1M-5 70.9L1087 32.6M-5 95.6L1087 39.5M-5 164.1L1087 58.4M1087 191.9L-5 140M1087 114.4L-5 85.8M1087 84.7L-5 65M1087 69L-5 54M1087 59.3L-5 47.2M1087 52.7L-5 42.6M1087 47.9L-5 39.3M1087 44.3L-5 36.7M1087 41.5L-5 34.8M1087 39.2L-5 33.2M1087 37.3L-5 31.9M1087 35.8L-5 30.8M1087 34.4L-5 29.8M1087 33.3L-5 29M1087 32.3L-5 28.3M1087 31.4L-5 27.7M1087 30.6L-5 27.2M1087 30L-5 26.7M1087 29.3L-5 26.3M1087 28.8L-5 25.9M1087 28.3L-5 25.5M1087 27.8L-5 25.2M1087 27.4L-5 24.9M1087 27L-5 24.7M1087 26.7L-5 24.4M1087 26.4L-5 24.2M1087 26L-5 24M1087 25.8L-5 23.8M1087 25.5L-5 23.6M1087 25.3L-5 23.4M1087 25L-5 23.3M1087 24.8L-5 23.1M1087 24.6L-5 23M1087 24.4L-5 22.8M1087 24.3L-5 22.7M1087 24.1L-5 22.6M1087 23.9L-5 22.5M1087 23.8L-5 22.4M1087 23.6L-5 22.3M1087 23.5L-5 22.2M1087 23.4L-5 22.1M1087 23.2L-5 22M1087 23.1L-5 21.9M1087 23L-5 21.8M1087 22.9L-5 21.8M1087 22.8L-5 21.7M1087 22.7L-5 21.6M1087 22.6L-5 21.6M1087 22.5L-5 21.5M1087 22.4L-5 21.4M1087 22.3L-5 21.4M1087 22.3L-5 21.3M1087 22.2L-5 21.3M1087 22.1L-5 21.2M1087 22L-5 21.2M1087 22L-5 21.1M1087 21.9L-5 21.1M1087 21.8L-5 21M1087 21.8L-5 21M1087 21.7L-5 20.9M1087 21.7L-5 20.9M1087 21.6L-5 20.8M1087 21.5L-5 20.8M1087 21.5L-5 20.8M1087 21.4L-5 20.7M1087 21.4L-5 20.7M1087 21.3L-5 20.7M1087 21.3L-5 20.6M1087 21.2L-5 20.6M1087 21.2L-5 20.6M1087 21.2L-5 20.5M1087 21.1L-5 20.5M1087 21.1L-5 20.5M1087 21L-5 20.5M1087 21L-5 20.4M1087 21L-5 20.4M1087 20.9L-5 20.4M1087 20.9L-5 20.4M1087 20.9L-5 20.3M1087 20.8L-5 20.3M1087 20.8L-5 20.3M1087 20.8L-5 20.3M1087 20.7L-5 20.2M1087 20.7L-5 20.2M1087 20.7L-5 20.2M1087 20.6L-5 20.2M1087 20.6L-5 20.2M1087 20.6L-5 20.1M1087 20.5L-5 20.1M1087 20.5L-5 20.1M1087 20.5L-5 20.1M1087 20.5L4.2 20.1M1087 20.4L52.4 20.1M1087 20.4L101.3 20.1M1087 20.4L151 20.1M1087 20.4L201.6 20.1M1087 20.3L252.9 20.1M1087 20.3L305.1 20.1M1087 20.3L358.2 20.1M1087 20.3L412.2 20.1M1087 20.3L467.1 20.1M1087 20.2L522.9 20.1M1087 20.2L579.7 20.1M1087 20.2L637.5 20.1M1087 20.2L696.3 20.1M1087 20.2L756.1 20.1M1087 20.1L817 20.1M1087 20.1L879.1 20.1M1087 20.1L942.2 20.1M1087 20.1L1006.5 20.1M1087 20.1L1072 20.1" stroke="#686868" stroke-opacity="0.50" stroke-width="2.70"/></g>
</g>
<g id="axes" fill="none" mask="url(#mh)"><path d="M1087 910L-5 642.2" stroke="#ab364c" stroke-width="3.10"/><path d="M303 1047L1087 375.3" stroke="#6e9a24" stroke-width="3.10"/></g>
<clipPath id="bg"><polygon points="363.2,765.1 463.6,790.5 525.8,745.5 527.6,793.9 464.8,843.5 364.6,816.5"/><polygon points="689.5,849.7 815.1,880.8 860.6,827.7 857.9,879.5 812,938.6 688.1,904.9"/></clipPath>
</defs>
<rect width="1082" height="1042" fill="#3f3f3f"/>
<use href="#grid"/><use href="#axes"/>
<g stroke="#000" stroke-width="1.25" stroke-linejoin="round" stroke-linecap="round">
<polygon points="464.8,843.5 463.6,797.4 525.8,752.9 527.6,793.9" fill="#3b3738" stroke="none"/>
<polygon points="463.6,797.4 462.5,750.2 525.3,707.5 525.8,752.9" fill="#3b3738"/>
<polygon points="462.5,750.2 461.3,701.8 524.7,662.2 525.3,707.5" fill="#3b3738"/>
<polygon points="461.3,701.8 460,653.4 524.2,616.8 524.7,662.2" fill="#3b3738"/>
<polygon points="460,653.4 458.5,603.4 523.5,568.6 524.2,616.8" fill="#3b3738"/>
<polygon points="458.5,603.4 457.2,551.6 523,519.3 523.5,568.6" fill="#3b3738"/>
<polygon points="457.2,551.6 455.8,499.1 522.6,469.6 523,519.3" fill="#3b3738"/>
<polygon points="455.8,499.1 454.5,445.3 522.1,419.3 522.6,469.6" fill="#3b3738"/>
<polygon points="454.5,445.3 459,399.8 526.9,376.3 522.1,419.3" fill="#403d3d"/>
<polygon points="459,399.8 472.3,367 539.5,345.8 526.9,376.3" fill="#464342"/>
<polygon points="472.3,367 492.7,344.5 558.5,325.1 539.5,345.8" fill="#4b4745"/>
<polygon points="492.7,344.5 520.4,328.9 586.2,309.5 558.5,325.1" fill="#4f4b48"/>
<polygon points="814.6,888.1 812,938.6 857.9,879.5 860.5,833.4" fill="#3c3a3c" stroke="none"/>
<polygon points="537.7,178.2 606.4,182.2 668.8,169.2 602.9,166.3" fill="#8e9091"/>
<polygon points="606.4,182.2 675.9,206 735.1,191.8 668.8,169.2" fill="#858687"/>
<polygon points="675.9,206 740.9,250.8 796.5,233.9 735.1,191.8" fill="#7e7f80"/>
<polygon points="740.9,250.8 795.1,318.5 846.6,297 796.5,233.9" fill="#757677"/>
<polygon points="795.1,318.5 828,403.8 877.5,376.8 846.6,297" fill="#646566"/>
<polygon points="828,403.8 836.6,500.3 884.9,466.6 877.5,376.8" fill="#48484a"/>
<polygon points="836.6,500.3 833.2,559.4 880.9,522.6 884.9,466.6" fill="#3c3a3c"/>
<polygon points="833.2,559.4 829.7,617.7 877,577.4 880.9,522.6" fill="#3c3a3c"/>
<polygon points="829.7,617.7 826.3,674.6 873.5,630.8 877,577.4" fill="#3c3a3c"/>
<polygon points="826.3,674.6 824.2,729.2 869.8,683.9 873.5,630.8" fill="#3c3a3c"/>
<polygon points="824.2,729.2 821.1,783.7 866.4,734.4 869.8,683.9" fill="#3c3a3c"/>
<polygon points="821.1,783.7 817.7,836.8 863.1,784.2 866.4,734.4" fill="#3c3a3c"/>
<polygon points="817.7,836.8 814.6,888.1 860.5,833.4 863.1,784.2" fill="#3c3a3c"/>
<polygon points="364.6,816.5 363.4,772.7 463.6,797.4 464.8,843.5" fill="#989a9a" stroke="none"/>
<polygon points="814.6,888.1 812,938.6 688.1,904.9 689.4,857.5" fill="#989a9a" stroke="none"/>
<polygon points="363.4,772.7 361.1,726.7 462.5,750.2 463.6,797.4" fill="#989a9a"/>
<polygon points="361.1,726.7 358.8,679.9 461.3,701.8 462.5,750.2" fill="#989a9a"/>
<polygon points="358.8,679.9 356.3,633 460,653.4 461.3,701.8" fill="#989a9a"/>
<polygon points="356.3,633 354.2,583.8 458.5,603.4 460,653.4" fill="#989a9a"/>
<polygon points="354.2,583.8 351.4,533.6 457.2,551.6 458.5,603.4" fill="#989a9a"/>
<polygon points="351.4,533.6 348.9,483.2 455.8,499.1 457.2,551.6" fill="#989a9a"/>
<polygon points="348.9,483.2 346.1,431.1 454.5,445.3 455.8,499.1" fill="#989a9a"/>
<polygon points="346.1,431.1 351.9,349.7 459,399.8 454.5,445.3" fill="#989a9a"/>
<polygon points="351.9,349.7 376.9,281.3 472.3,367 459,399.8" fill="#989a9a"/>
<polygon points="376.9,281.3 419.1,228.2 492.7,344.5 472.3,367" fill="#989a9a"/>
<polygon points="419.1,228.2 474.4,193.4 520.4,328.9 492.7,344.5" fill="#989a9a"/>
<polygon points="474.4,193.4 537.7,178.2 553.8,323.4 520.4,328.9" fill="#989a9a"/>
<polygon points="537.7,178.2 606.4,182.2 589.3,326.5 553.8,323.4" fill="#989a9a"/>
<polygon points="606.4,182.2 675.9,206 624.5,339.9 589.3,326.5" fill="#989a9a"/>
<polygon points="675.9,206 740.9,250.8 654.9,361.8 624.5,339.9" fill="#989a9a"/>
<polygon points="740.9,250.8 795.1,318.5 678.8,391.7 654.9,361.8" fill="#989a9a"/>
<polygon points="795.1,318.5 828,403.8 694.2,430.5 678.8,391.7" fill="#989a9a"/>
<polygon points="828,403.8 836.6,500.3 699,480.7 694.2,430.5" fill="#989a9a"/>
<polygon points="836.6,500.3 833.2,559.4 697.7,538.7 699,480.7" fill="#989a9a"/>
<polygon points="833.2,559.4 829.7,617.7 696.6,595.1 697.7,538.7" fill="#989a9a"/>
<polygon points="829.7,617.7 826.3,674.6 695,650.4 696.6,595.1" fill="#989a9a"/>
<polygon points="826.3,674.6 824.2,729.2 693.3,703.8 695,650.4" fill="#989a9a"/>
<polygon points="824.2,729.2 821.1,783.7 692,756.4 693.3,703.8" fill="#989a9a"/>
<polygon points="821.1,783.7 817.7,836.8 690.7,807.5 692,756.4" fill="#989a9a"/>
<polygon points="817.7,836.8 814.6,888.1 689.4,857.5 690.7,807.5" fill="#989a9a"/>
</g>
<g fill="none" stroke-width="1">
<path d="M363.2 765.1L463.6 790.5" stroke="#6e7070" stroke-opacity="0.25" stroke-dasharray="2 2"/>
<path d="M463.6 790.5L525.8 745.5" stroke="#6a6868" stroke-opacity="0.3"/>
<path d="M689.5 849.7L815.1 880.8" stroke="#6e7070" stroke-opacity="0.25" stroke-dasharray="2 2"/>
<path d="M815.1 880.8L860.6 827.7" stroke="#6a6868" stroke-opacity="0.3"/>
<path d="M497 340L554 322.8" stroke="#222" stroke-opacity="0.6" stroke-width="0.7" stroke-dasharray="3 1.5"/>
</g>
<g clip-path="url(#bg)"><use href="#grid" opacity="0.6"/><use href="#axes"/>
</g>
<path fill="none" stroke="#000" stroke-width="1.25" stroke-linejoin="round" stroke-linecap="round" d="M363.4 772.7L364.6 816.5L464.8 843.5L463.6 797.4M464.8 843.5L527.6 793.9L525.8 752.9M689.4 857.5L688.1 904.9L812 938.6L814.6 888.1M812 938.6L857.9 879.5L860.5 833.4"/>
<g fill="none" stroke-width="1.3">
<circle cx="602.5" cy="791.1" r="20.0" stroke="#fff"/>
<circle cx="602.5" cy="791.1" r="20.0" stroke="#f00" stroke-dasharray="10.000 5.708" stroke-dashoffset="7.300"/>
<path stroke="#000" stroke-width="1.4" d="M602.5 755.1V781.4M602.5 800.4V826.7M567.9 782.3L593.7 789.3M611.3 793.3L637.6 799.9M583.1 807.3L597.7 795.5M607.1 787L620.5 775.9"/>
</g>
<circle cx="776.8" cy="834.2" r="5.1" fill="#f5a021" stroke="#2a2a2a" stroke-width="1.2"/>
</svg></body></html>
